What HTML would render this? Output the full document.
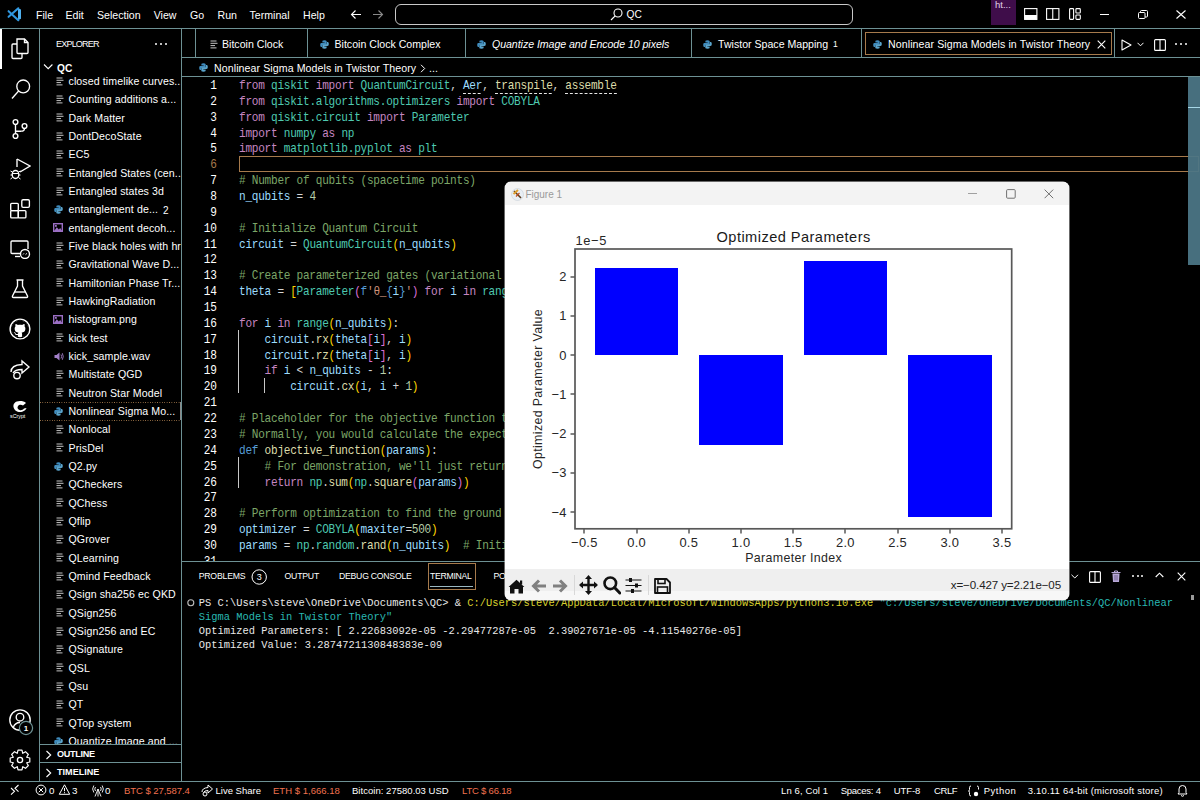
<!DOCTYPE html><html><head><meta charset="utf-8"><style>
html,body{margin:0;padding:0;background:#000;width:1200px;height:800px;overflow:hidden;position:relative;font-family:"Liberation Sans",sans-serif;}
div,svg{box-sizing:border-box}
</style></head><body>
<div style="position:absolute;left:0px;top:28px;width:1200px;height:1px;background:#6d9194"></div>
<svg style="position:absolute;left:6px;top:6px;" width="17" height="17" viewBox="0 0 17 17"><path d="M12 2.2 L15 3.6 V12.8 L12 14.3 Z" fill="#4fb0ee"/><path d="M12.3 2.3 L2.6 10.8 M2.6 5.2 L12.3 14.2" stroke="#2f97e0" stroke-width="2.1" stroke-linecap="round"/></svg>
<div style="position:absolute;left:36px;top:8.61px;line-height:13.78px;font-size:10.6px;color:#fff;font-weight:normal;font-family:'Liberation Sans', sans-serif;white-space:pre;">File</div>
<div style="position:absolute;left:65.5px;top:8.61px;line-height:13.78px;font-size:10.6px;color:#fff;font-weight:normal;font-family:'Liberation Sans', sans-serif;white-space:pre;">Edit</div>
<div style="position:absolute;left:97px;top:8.61px;line-height:13.78px;font-size:10.6px;color:#fff;font-weight:normal;font-family:'Liberation Sans', sans-serif;white-space:pre;">Selection</div>
<div style="position:absolute;left:153.7px;top:8.61px;line-height:13.78px;font-size:10.6px;color:#fff;font-weight:normal;font-family:'Liberation Sans', sans-serif;white-space:pre;">View</div>
<div style="position:absolute;left:190px;top:8.61px;line-height:13.78px;font-size:10.6px;color:#fff;font-weight:normal;font-family:'Liberation Sans', sans-serif;white-space:pre;">Go</div>
<div style="position:absolute;left:217.5px;top:8.61px;line-height:13.78px;font-size:10.6px;color:#fff;font-weight:normal;font-family:'Liberation Sans', sans-serif;white-space:pre;">Run</div>
<div style="position:absolute;left:249.5px;top:8.61px;line-height:13.78px;font-size:10.6px;color:#fff;font-weight:normal;font-family:'Liberation Sans', sans-serif;white-space:pre;">Terminal</div>
<div style="position:absolute;left:303px;top:8.61px;line-height:13.78px;font-size:10.6px;color:#fff;font-weight:normal;font-family:'Liberation Sans', sans-serif;white-space:pre;">Help</div>
<svg style="position:absolute;left:350px;top:9px;" width="12" height="11" viewBox="0 0 12 11"><path d="M11 5.5 H1.5 M5.5 1.5 L1.5 5.5 L5.5 9.5" stroke="#fff" stroke-width="1.1" fill="none"/></svg>
<svg style="position:absolute;left:372px;top:9px;" width="12" height="11" viewBox="0 0 12 11"><path d="M1 5.5 H10.5 M6.5 1.5 L10.5 5.5 L6.5 9.5" stroke="#8a8a8a" stroke-width="1.1" fill="none"/></svg>
<div style="position:absolute;left:394.8px;top:4px;width:458px;height:20.8px;border:1px solid #c8c8c8;border-radius:6px"></div>
<svg style="position:absolute;left:610px;top:8px;" width="13" height="13" viewBox="0 0 13 13"><circle cx="8" cy="5" r="4" stroke="#fff" stroke-width="1.1" fill="none"/><path d="M5.2 7.8 L1 12" stroke="#fff" stroke-width="1.2"/></svg>
<div style="position:absolute;left:626.5px;top:8.37px;line-height:13.26px;font-size:10.2px;color:#fff;font-weight:normal;font-family:'Liberation Sans', sans-serif;white-space:pre;">QC</div>
<div style="position:absolute;left:991px;top:0px;width:25px;height:25px;background:#3f0d4a"></div>
<div style="position:absolute;left:995px;top:-0.67px;line-height:12.35px;font-size:9.5px;color:#e0d0e8;font-weight:normal;font-family:'Liberation Sans', sans-serif;white-space:pre;">ht...</div>
<svg style="position:absolute;left:1024px;top:8px;" width="14" height="12" viewBox="0 0 14 12"><rect x="0.6" y="0.6" width="12.3" height="10.8" stroke="#fff" stroke-width="1.1" fill="none"/><rect x="0.6" y="7" width="12.3" height="4.4" fill="#fff"/></svg>
<svg style="position:absolute;left:1046px;top:8px;" width="14" height="12" viewBox="0 0 14 12"><rect x="0.6" y="0.6" width="12.3" height="10.8" stroke="#fff" stroke-width="1.1" fill="none"/><path d="M6.75 0.6 V11.4" stroke="#fff" stroke-width="1.1"/></svg>
<svg style="position:absolute;left:1069px;top:8px;" width="12" height="12" viewBox="0 0 12 12"><rect x="0.6" y="0.6" width="4" height="10.8" rx="0.8" stroke="#fff" stroke-width="1.1" fill="none"/><rect x="6.9" y="0.6" width="4.4" height="4.4" rx="0.8" stroke="#fff" stroke-width="1.1" fill="none"/><rect x="6.9" y="7" width="4.4" height="4.4" rx="0.8" stroke="#fff" stroke-width="1.1" fill="none"/></svg>
<div style="position:absolute;left:1100px;top:14px;width:9px;height:1px;background:#fff"></div>
<svg style="position:absolute;left:1138px;top:10px;" width="10" height="9" viewBox="0 0 10 9"><rect x="0.5" y="2.5" width="6.5" height="6" rx="1" stroke="#fff" stroke-width="1" fill="none"/><path d="M2.5 2.5 V1.5 Q2.5 0.5 3.5 0.5 H8.5 Q9.5 0.5 9.5 1.5 V6 Q9.5 7 8.5 7 H7" stroke="#fff" stroke-width="1" fill="none"/></svg>
<svg style="position:absolute;left:1176px;top:10px;" width="10" height="9" viewBox="0 0 10 9"><path d="M0.5 0.5 L9.5 8.5 M9.5 0.5 L0.5 8.5" stroke="#fff" stroke-width="1.1"/></svg>
<div style="position:absolute;left:39px;top:29px;width:1px;height:752px;background:#6d9194"></div>
<div style="position:absolute;left:0px;top:29px;width:2px;height:40px;background:#fff"></div>
<svg style="position:absolute;left:10px;top:38px;" width="20" height="22" viewBox="0 0 20 22"><path d="M7 1 H14.5 L18 4.5 V14.5 Q18 15.5 17 15.5 H8 Q7 15.5 7 14.5 Z" stroke="#fff" stroke-width="1.35" fill="none"/><path d="M14.5 1 V4.5 H18" stroke="#fff" stroke-width="1.35" fill="none"/><path d="M7 6 H3 Q2 6 2 7 V19.5 Q2 20.5 3 20.5 H11 Q12 20.5 12 19.5 V15.5" stroke="#fff" stroke-width="1.35" fill="none"/></svg>
<svg style="position:absolute;left:10px;top:78px;" width="22" height="22" viewBox="0 0 22 22"><circle cx="13.2" cy="8.4" r="6.4" stroke="#fff" stroke-width="1.35" fill="none"/><path d="M8.6 13 L2 20.5" stroke="#fff" stroke-width="1.3"/></svg>
<svg style="position:absolute;left:10px;top:118px;" width="20" height="22" viewBox="0 0 20 22"><circle cx="5.5" cy="4" r="2.4" stroke="#fff" stroke-width="1.35" fill="none"/><circle cx="14.5" cy="8" r="2.4" stroke="#fff" stroke-width="1.35" fill="none"/><circle cx="5.5" cy="18" r="2.4" stroke="#fff" stroke-width="1.35" fill="none"/><path d="M5.5 6.4 V15.6 M14.5 10.4 Q14.5 13 11 13.2 H5.5" stroke="#fff" stroke-width="1.35" fill="none"/></svg>
<svg style="position:absolute;left:9px;top:158px;" width="22" height="22" viewBox="0 0 22 22"><path d="M8 1 L21 8 L11 14" stroke="#fff" stroke-width="1.35" fill="none"/><path d="M8 1 V9" stroke="#fff" stroke-width="1.35" fill="none"/><ellipse cx="6.5" cy="16.5" rx="3.3" ry="4" stroke="#fff" stroke-width="1.35" fill="none"/><path d="M1.5 13 L3.5 14 M1.5 17 H3.2 M1.5 21 L3.5 19.5 M11.5 13 L9.5 14 M11.5 17 H9.8 M11.5 21 L9.5 19.5 M3.5 15.5 H9.5" stroke="#fff" stroke-width="1"/></svg>
<svg style="position:absolute;left:10px;top:199px;" width="21" height="20" viewBox="0 0 21 20"><rect x="0.7" y="4.3" width="7.6" height="7.3" rx="1" stroke="#fff" stroke-width="1.35" fill="none"/><rect x="0.7" y="11.6" width="7.6" height="7.3" rx="1" stroke="#fff" stroke-width="1.35" fill="none"/><rect x="8.3" y="11.6" width="7.6" height="7.3" rx="1" stroke="#fff" stroke-width="1.35" fill="none"/><rect x="11.8" y="0.7" width="7.6" height="7.6" rx="1.3" stroke="#fff" stroke-width="1.35" fill="none"/></svg>
<svg style="position:absolute;left:10px;top:240px;" width="21" height="19" viewBox="0 0 21 19"><path d="M11 13.5 H2 Q1 13.5 1 12.5 V2 Q1 1 2 1 H17 Q18 1 18 2 V9" stroke="#fff" stroke-width="1.35" fill="none"/><path d="M5 16.5 H10" stroke="#fff" stroke-width="1.35" fill="none"/><circle cx="15" cy="14" r="4.5" stroke="#fff" stroke-width="1.35" fill="none"/><path d="M13 14.5 L14 13.3 M15.5 14.7 L17 13.3" stroke="#fff" stroke-width="0.9"/></svg>
<svg style="position:absolute;left:11px;top:279px;" width="18" height="20" viewBox="0 0 18 20"><path d="M5.5 1 H12.5 M6.5 1 V7 L1.5 17 Q1 18.5 2.5 18.5 H15.5 Q17 18.5 16.5 17 L11.5 7 V1" stroke="#fff" stroke-width="1.35" fill="none"/><path d="M3.5 13 H14.5" stroke="#fff" stroke-width="1.35" fill="none"/></svg>
<svg style="position:absolute;left:9px;top:318px;" width="22" height="22" viewBox="0 0 22 22"><circle cx="11" cy="11" r="9.9" stroke="#fff" stroke-width="1.4" fill="none"/><circle cx="11" cy="11" r="8.2" fill="#fff"/><path transform="translate(2.6 2.6) scale(1.05)" d="M8 0C3.58 0 0 3.58 0 8c0 3.54 2.29 6.53 5.47 7.59.4.07.55-.17.55-.38 0-.19-.01-.82-.01-1.49-2.01.37-2.530-.49-2.69-.94-.09-.23-.48-.94-.82-1.13-.28-.15-.68-.52-.01-.53.63-.01 1.08.58 1.23.82.72 1.21 1.87.87 2.33.66.07-.52.28-.87.51-1.07-1.78-.2-3.64-.89-3.64-3.950 0-.87.31-1.59.82-2.15-.08-.2-.36-1.02.08-2.12 0 0 .67-.21 2.2.82.64-.18 1.32-.27 2-.27.68 0 1.36.09 2 .27 1.53-1.04 2.2-.82 2.2-.82.44 1.1.16 1.920.08 2.12.51.56.82 1.27.82 2.15 0 3.07-1.87 3.75-3.65 3.95.29.25.54.73.54 1.48 0 1.07-.01 1.93-.01 2.2 0 .21.15.46.55.38A8.013 8.013 0 0016 8c0-4.42-3.58-8-8-8z" fill="#000"/></svg>
<svg style="position:absolute;left:9px;top:358px;" width="22" height="22" viewBox="0 0 22 22"><circle cx="8" cy="17.5" r="3.2" stroke="#fff" stroke-width="1.35" fill="none"/><path d="M2 14 Q2 7 13 6.5 V3 L20 9 L13 15 V11.5 Q6 11.5 4 15" stroke="#fff" stroke-width="1.35" fill="none"/></svg>
<svg style="position:absolute;left:11px;top:400px;" width="18" height="14" viewBox="0 0 18 14"><path d="M9 1 C4 1 2 4 2.5 7 C3 10 6 12 9 12 C12 12 15 10 15.5 8 L13 8.5 C12 10 10 10.5 8.5 10 C6.5 9.3 6 7.5 7 6 C8 4.5 10.5 4.5 12 5.5 L15 3 C13.5 1.5 11.5 1 9 1 Z" fill="#fff"/></svg>
<div style="position:absolute;left:10px;top:413.06px;line-height:6.89px;font-size:5.3px;color:#fff;font-weight:normal;font-family:'Liberation Sans', sans-serif;white-space:pre;">sCrypt</div>
<svg style="position:absolute;left:8px;top:708px;" width="30" height="30" viewBox="0 0 30 30"><circle cx="12" cy="12" r="10.2" stroke="#fff" stroke-width="1.35" fill="none"/><circle cx="12" cy="9.2" r="3.8" stroke="#fff" stroke-width="1.35" fill="none"/><path d="M5.2 19.6 Q7 14.5 12 14.5" stroke="#fff" stroke-width="1.35" fill="none"/></svg>
<svg style="position:absolute;left:18px;top:720px;" width="16" height="16" viewBox="0 0 16 16"><circle cx="8" cy="8" r="6.6" fill="#000" stroke="#6d9194" stroke-width="1.2"/><text x="8" y="11" font-size="8" font-family="Liberation Sans" font-weight="bold" fill="#fff" text-anchor="middle">1</text></svg>
<svg style="position:absolute;left:8px;top:748px;" width="24" height="24" viewBox="0 0 24 24"><polygon points="21.80,10.01 21.80,13.99 18.66,14.74 18.65,14.77 20.33,17.53 17.53,20.33 14.77,18.64 14.74,18.66 13.99,21.80 10.01,21.80 9.26,18.66 9.23,18.65 6.47,20.33 3.67,17.53 5.36,14.77 5.34,14.74 2.20,13.99 2.20,10.01 5.34,9.26 5.35,9.23 3.67,6.47 6.47,3.67 9.23,5.36 9.26,5.34 10.01,2.20 13.99,2.20 14.74,5.34 14.77,5.35 17.53,3.67 20.33,6.47 18.64,9.23 18.66,9.26" stroke="#fff" stroke-width="1.2" fill="none" stroke-linejoin="round"/><circle cx="12" cy="12" r="2.6" stroke="#fff" stroke-width="1.35" fill="none"/></svg>
<div style="position:absolute;left:181px;top:29px;width:1px;height:752px;background:#6d9194"></div>
<div style="position:absolute;left:56px;top:38.88px;line-height:11.83px;font-size:9.1px;color:#fff;font-weight:normal;font-family:'Liberation Sans', sans-serif;white-space:pre;letter-spacing:-0.85px">EXPLORER</div>
<div style="position:absolute;left:155px;top:43px;width:2px;height:2px;background:#fff;border-radius:1px"></div>
<div style="position:absolute;left:160px;top:43px;width:2px;height:2px;background:#fff;border-radius:1px"></div>
<div style="position:absolute;left:165px;top:43px;width:2px;height:2px;background:#fff;border-radius:1px"></div>
<svg style="position:absolute;left:43px;top:63px;" width="11" height="8" viewBox="0 0 11 8"><path d="M1 1.5 L5.2 5.7 L9.4 1.5" stroke="#fff" stroke-width="1.1" fill="none"/></svg>
<div style="position:absolute;left:57px;top:62.37px;line-height:13.26px;font-size:10.2px;color:#fff;font-weight:bold;font-family:'Liberation Sans', sans-serif;white-space:pre;">QC</div>
<div style="position:absolute;left:40px;top:71px;width:141px;height:673px;overflow:hidden">
<svg style="position:absolute;left:16px;top:5.700000000000003px;" width="8" height="9" viewBox="0 0 8 9"><path d="M0.5 1 H6.5 M0.5 3.3 H7.5 M0.5 5.6 H5 M0.5 7.9 H6.5" stroke="#d0d0d0" stroke-width="0.95"/></svg>
<div style="position:absolute;left:28.5px;top:4.01px;line-height:13.78px;font-size:10.6px;color:#fff;font-weight:normal;font-family:'Liberation Sans', sans-serif;white-space:pre;letter-spacing:0.1px">closed timelike curves...</div>
<svg style="position:absolute;left:16px;top:24.03px;" width="8" height="9" viewBox="0 0 8 9"><path d="M0.5 1 H6.5 M0.5 3.3 H7.5 M0.5 5.6 H5 M0.5 7.9 H6.5" stroke="#d0d0d0" stroke-width="0.95"/></svg>
<div style="position:absolute;left:28.5px;top:22.34px;line-height:13.78px;font-size:10.6px;color:#fff;font-weight:normal;font-family:'Liberation Sans', sans-serif;white-space:pre;letter-spacing:0.1px">Counting additions a...</div>
<svg style="position:absolute;left:16px;top:42.36px;" width="8" height="9" viewBox="0 0 8 9"><path d="M0.5 1 H6.5 M0.5 3.3 H7.5 M0.5 5.6 H5 M0.5 7.9 H6.5" stroke="#d0d0d0" stroke-width="0.95"/></svg>
<div style="position:absolute;left:28.5px;top:40.67px;line-height:13.78px;font-size:10.6px;color:#fff;font-weight:normal;font-family:'Liberation Sans', sans-serif;white-space:pre;letter-spacing:0.1px">Dark Matter</div>
<svg style="position:absolute;left:16px;top:60.69px;" width="8" height="9" viewBox="0 0 8 9"><path d="M0.5 1 H6.5 M0.5 3.3 H7.5 M0.5 5.6 H5 M0.5 7.9 H6.5" stroke="#d0d0d0" stroke-width="0.95"/></svg>
<div style="position:absolute;left:28.5px;top:59.0px;line-height:13.78px;font-size:10.6px;color:#fff;font-weight:normal;font-family:'Liberation Sans', sans-serif;white-space:pre;letter-spacing:0.1px">DontDecoState</div>
<svg style="position:absolute;left:16px;top:79.01999999999998px;" width="8" height="9" viewBox="0 0 8 9"><path d="M0.5 1 H6.5 M0.5 3.3 H7.5 M0.5 5.6 H5 M0.5 7.9 H6.5" stroke="#d0d0d0" stroke-width="0.95"/></svg>
<div style="position:absolute;left:28.5px;top:77.33px;line-height:13.78px;font-size:10.6px;color:#fff;font-weight:normal;font-family:'Liberation Sans', sans-serif;white-space:pre;letter-spacing:0.1px">EC5</div>
<svg style="position:absolute;left:16px;top:97.35px;" width="8" height="9" viewBox="0 0 8 9"><path d="M0.5 1 H6.5 M0.5 3.3 H7.5 M0.5 5.6 H5 M0.5 7.9 H6.5" stroke="#d0d0d0" stroke-width="0.95"/></svg>
<div style="position:absolute;left:28.5px;top:95.66px;line-height:13.78px;font-size:10.6px;color:#fff;font-weight:normal;font-family:'Liberation Sans', sans-serif;white-space:pre;letter-spacing:0.1px">Entangled States (cen...</div>
<svg style="position:absolute;left:16px;top:115.68px;" width="8" height="9" viewBox="0 0 8 9"><path d="M0.5 1 H6.5 M0.5 3.3 H7.5 M0.5 5.6 H5 M0.5 7.9 H6.5" stroke="#d0d0d0" stroke-width="0.95"/></svg>
<div style="position:absolute;left:28.5px;top:113.99px;line-height:13.78px;font-size:10.6px;color:#fff;font-weight:normal;font-family:'Liberation Sans', sans-serif;white-space:pre;letter-spacing:0.1px">Entangled states 3d</div>
<svg style="position:absolute;left:14px;top:134.01px;" width="9" height="9" viewBox="0 0 9 9"><path d="M4.5 0.3 C2.2 0.3 2.4 1.3 2.4 1.3 V2.6 H4.6 V3.1 H1.4 C1.4 3.1 0.2 3 0.2 5 C0.2 7 1.3 7 1.3 7 H2 V5.8 C2 5.8 2 4.7 3.1 4.7 H5.7 C5.7 4.7 6.7 4.7 6.7 3.7 V1.6 C6.7 1.6 6.9 0.3 4.5 0.3 Z" fill="#3f8bbd"/><path d="M4.5 8.7 C6.8 8.7 6.6 7.7 6.6 7.7 V6.4 H4.4 V5.9 H7.6 C7.6 5.9 8.8 6 8.8 4 C8.8 2 7.7 2 7.7 2 H7 V3.2 C7 3.2 7 4.3 5.9 4.3 H3.3 C3.3 4.3 2.3 4.3 2.3 5.3 V7.4 C2.3 7.4 2.1 8.7 4.5 8.7 Z" fill="#5aa4cc"/></svg>
<div style="position:absolute;left:28.5px;top:132.32px;line-height:13.78px;font-size:10.6px;color:#fff;font-weight:normal;font-family:'Liberation Sans', sans-serif;white-space:pre;letter-spacing:0.1px">entanglement de...</div>
<div style="position:absolute;left:123px;top:133.01px;line-height:13.0px;font-size:10px;color:#fff;font-weight:normal;font-family:'Liberation Sans', sans-serif;white-space:pre;">2</div>
<svg style="position:absolute;left:13px;top:152.33999999999997px;" width="10" height="9" viewBox="0 0 10 9"><rect x="0.7" y="0.7" width="8.6" height="7.6" fill="none" stroke="#9b6fc4" stroke-width="1.4"/><path d="M1 8.3 L3.8 4.3 L5.8 6.5 L7.2 5 L9.3 8.3 Z" fill="#9b6fc4"/><rect x="2" y="2" width="1.8" height="1.8" fill="#9b6fc4"/></svg>
<div style="position:absolute;left:28.5px;top:150.65px;line-height:13.78px;font-size:10.6px;color:#fff;font-weight:normal;font-family:'Liberation Sans', sans-serif;white-space:pre;letter-spacing:0.1px">entanglement decoh...</div>
<svg style="position:absolute;left:16px;top:170.66999999999996px;" width="8" height="9" viewBox="0 0 8 9"><path d="M0.5 1 H6.5 M0.5 3.3 H7.5 M0.5 5.6 H5 M0.5 7.9 H6.5" stroke="#d0d0d0" stroke-width="0.95"/></svg>
<div style="position:absolute;left:28.5px;top:168.98px;line-height:13.78px;font-size:10.6px;color:#fff;font-weight:normal;font-family:'Liberation Sans', sans-serif;white-space:pre;letter-spacing:0.1px">Five black holes with hr</div>
<svg style="position:absolute;left:16px;top:189.0px;" width="8" height="9" viewBox="0 0 8 9"><path d="M0.5 1 H6.5 M0.5 3.3 H7.5 M0.5 5.6 H5 M0.5 7.9 H6.5" stroke="#d0d0d0" stroke-width="0.95"/></svg>
<div style="position:absolute;left:28.5px;top:187.31px;line-height:13.78px;font-size:10.6px;color:#fff;font-weight:normal;font-family:'Liberation Sans', sans-serif;white-space:pre;letter-spacing:0.1px">Gravitational Wave D...</div>
<svg style="position:absolute;left:16px;top:207.32999999999998px;" width="8" height="9" viewBox="0 0 8 9"><path d="M0.5 1 H6.5 M0.5 3.3 H7.5 M0.5 5.6 H5 M0.5 7.9 H6.5" stroke="#d0d0d0" stroke-width="0.95"/></svg>
<div style="position:absolute;left:28.5px;top:205.64px;line-height:13.78px;font-size:10.6px;color:#fff;font-weight:normal;font-family:'Liberation Sans', sans-serif;white-space:pre;letter-spacing:0.1px">Hamiltonian Phase Tr...</div>
<svg style="position:absolute;left:16px;top:225.65999999999997px;" width="8" height="9" viewBox="0 0 8 9"><path d="M0.5 1 H6.5 M0.5 3.3 H7.5 M0.5 5.6 H5 M0.5 7.9 H6.5" stroke="#d0d0d0" stroke-width="0.95"/></svg>
<div style="position:absolute;left:28.5px;top:223.97px;line-height:13.78px;font-size:10.6px;color:#fff;font-weight:normal;font-family:'Liberation Sans', sans-serif;white-space:pre;letter-spacing:0.1px">HawkingRadiation</div>
<svg style="position:absolute;left:13px;top:243.98999999999995px;" width="10" height="9" viewBox="0 0 10 9"><rect x="0.7" y="0.7" width="8.6" height="7.6" fill="none" stroke="#9b6fc4" stroke-width="1.4"/><path d="M1 8.3 L3.8 4.3 L5.8 6.5 L7.2 5 L9.3 8.3 Z" fill="#9b6fc4"/><rect x="2" y="2" width="1.8" height="1.8" fill="#9b6fc4"/></svg>
<div style="position:absolute;left:28.5px;top:242.3px;line-height:13.78px;font-size:10.6px;color:#fff;font-weight:normal;font-family:'Liberation Sans', sans-serif;white-space:pre;letter-spacing:0.1px">histogram.png</div>
<svg style="position:absolute;left:16px;top:262.32px;" width="8" height="9" viewBox="0 0 8 9"><path d="M0.5 1 H6.5 M0.5 3.3 H7.5 M0.5 5.6 H5 M0.5 7.9 H6.5" stroke="#d0d0d0" stroke-width="0.95"/></svg>
<div style="position:absolute;left:28.5px;top:260.63px;line-height:13.78px;font-size:10.6px;color:#fff;font-weight:normal;font-family:'Liberation Sans', sans-serif;white-space:pre;letter-spacing:0.1px">kick test</div>
<svg style="position:absolute;left:14px;top:280.65px;" width="10" height="9" viewBox="0 0 10 9"><path d="M0.5 3 H2.5 L5.5 0.5 V8.5 L2.5 6 H0.5 Z" fill="#a27fc8"/><path d="M7 2.5 Q8.3 4.5 7 6.5 M8.3 1.2 Q10.2 4.5 8.3 7.8" stroke="#a27fc8" stroke-width="0.9" fill="none"/></svg>
<div style="position:absolute;left:28.5px;top:278.96px;line-height:13.78px;font-size:10.6px;color:#fff;font-weight:normal;font-family:'Liberation Sans', sans-serif;white-space:pre;letter-spacing:0.1px">kick_sample.wav</div>
<svg style="position:absolute;left:16px;top:298.97999999999996px;" width="8" height="9" viewBox="0 0 8 9"><path d="M0.5 1 H6.5 M0.5 3.3 H7.5 M0.5 5.6 H5 M0.5 7.9 H6.5" stroke="#d0d0d0" stroke-width="0.95"/></svg>
<div style="position:absolute;left:28.5px;top:297.29px;line-height:13.78px;font-size:10.6px;color:#fff;font-weight:normal;font-family:'Liberation Sans', sans-serif;white-space:pre;letter-spacing:0.1px">Multistate QGD</div>
<svg style="position:absolute;left:16px;top:317.30999999999995px;" width="8" height="9" viewBox="0 0 8 9"><path d="M0.5 1 H6.5 M0.5 3.3 H7.5 M0.5 5.6 H5 M0.5 7.9 H6.5" stroke="#d0d0d0" stroke-width="0.95"/></svg>
<div style="position:absolute;left:28.5px;top:315.62px;line-height:13.78px;font-size:10.6px;color:#fff;font-weight:normal;font-family:'Liberation Sans', sans-serif;white-space:pre;letter-spacing:0.1px">Neutron Star Model</div>
<div style="position:absolute;left:0.3px;top:330.93999999999994px;width:140.5px;height:1px;background-image:linear-gradient(90deg,#a67a4c 50%,transparent 50%);background-size:2.4px 1px"></div>
<div style="position:absolute;left:0.3px;top:348.5399999999999px;width:140.5px;height:1px;background-image:linear-gradient(90deg,#a67a4c 50%,transparent 50%);background-size:2.4px 1px"></div>
<div style="position:absolute;left:139.5px;top:331.13999999999993px;width:1px;height:17.6px;background:#8a8a8a"></div>
<svg style="position:absolute;left:14px;top:335.63999999999993px;" width="9" height="9" viewBox="0 0 9 9"><path d="M4.5 0.3 C2.2 0.3 2.4 1.3 2.4 1.3 V2.6 H4.6 V3.1 H1.4 C1.4 3.1 0.2 3 0.2 5 C0.2 7 1.3 7 1.3 7 H2 V5.8 C2 5.8 2 4.7 3.1 4.7 H5.7 C5.7 4.7 6.7 4.7 6.7 3.7 V1.6 C6.7 1.6 6.9 0.3 4.5 0.3 Z" fill="#3f8bbd"/><path d="M4.5 8.7 C6.8 8.7 6.6 7.7 6.6 7.7 V6.4 H4.4 V5.9 H7.6 C7.6 5.9 8.8 6 8.8 4 C8.8 2 7.7 2 7.7 2 H7 V3.2 C7 3.2 7 4.3 5.9 4.3 H3.3 C3.3 4.3 2.3 4.3 2.3 5.3 V7.4 C2.3 7.4 2.1 8.7 4.5 8.7 Z" fill="#5aa4cc"/></svg>
<div style="position:absolute;left:28.5px;top:333.95px;line-height:13.78px;font-size:10.6px;color:#fff;font-weight:normal;font-family:'Liberation Sans', sans-serif;white-space:pre;letter-spacing:0.1px">Nonlinear Sigma Mo...</div>
<svg style="position:absolute;left:16px;top:353.96999999999997px;" width="8" height="9" viewBox="0 0 8 9"><path d="M0.5 1 H6.5 M0.5 3.3 H7.5 M0.5 5.6 H5 M0.5 7.9 H6.5" stroke="#d0d0d0" stroke-width="0.95"/></svg>
<div style="position:absolute;left:28.5px;top:352.28px;line-height:13.78px;font-size:10.6px;color:#fff;font-weight:normal;font-family:'Liberation Sans', sans-serif;white-space:pre;letter-spacing:0.1px">Nonlocal</div>
<svg style="position:absolute;left:16px;top:372.29999999999995px;" width="8" height="9" viewBox="0 0 8 9"><path d="M0.5 1 H6.5 M0.5 3.3 H7.5 M0.5 5.6 H5 M0.5 7.9 H6.5" stroke="#d0d0d0" stroke-width="0.95"/></svg>
<div style="position:absolute;left:28.5px;top:370.61px;line-height:13.78px;font-size:10.6px;color:#fff;font-weight:normal;font-family:'Liberation Sans', sans-serif;white-space:pre;letter-spacing:0.1px">PrisDel</div>
<svg style="position:absolute;left:14px;top:390.62999999999994px;" width="9" height="9" viewBox="0 0 9 9"><path d="M4.5 0.3 C2.2 0.3 2.4 1.3 2.4 1.3 V2.6 H4.6 V3.1 H1.4 C1.4 3.1 0.2 3 0.2 5 C0.2 7 1.3 7 1.3 7 H2 V5.8 C2 5.8 2 4.7 3.1 4.7 H5.7 C5.7 4.7 6.7 4.7 6.7 3.7 V1.6 C6.7 1.6 6.9 0.3 4.5 0.3 Z" fill="#3f8bbd"/><path d="M4.5 8.7 C6.8 8.7 6.6 7.7 6.6 7.7 V6.4 H4.4 V5.9 H7.6 C7.6 5.9 8.8 6 8.8 4 C8.8 2 7.7 2 7.7 2 H7 V3.2 C7 3.2 7 4.3 5.9 4.3 H3.3 C3.3 4.3 2.3 4.3 2.3 5.3 V7.4 C2.3 7.4 2.1 8.7 4.5 8.7 Z" fill="#5aa4cc"/></svg>
<div style="position:absolute;left:28.5px;top:388.94px;line-height:13.78px;font-size:10.6px;color:#fff;font-weight:normal;font-family:'Liberation Sans', sans-serif;white-space:pre;letter-spacing:0.1px">Q2.py</div>
<svg style="position:absolute;left:16px;top:408.96px;" width="8" height="9" viewBox="0 0 8 9"><path d="M0.5 1 H6.5 M0.5 3.3 H7.5 M0.5 5.6 H5 M0.5 7.9 H6.5" stroke="#d0d0d0" stroke-width="0.95"/></svg>
<div style="position:absolute;left:28.5px;top:407.27px;line-height:13.78px;font-size:10.6px;color:#fff;font-weight:normal;font-family:'Liberation Sans', sans-serif;white-space:pre;letter-spacing:0.1px">QCheckers</div>
<svg style="position:absolute;left:16px;top:427.28999999999996px;" width="8" height="9" viewBox="0 0 8 9"><path d="M0.5 1 H6.5 M0.5 3.3 H7.5 M0.5 5.6 H5 M0.5 7.9 H6.5" stroke="#d0d0d0" stroke-width="0.95"/></svg>
<div style="position:absolute;left:28.5px;top:425.6px;line-height:13.78px;font-size:10.6px;color:#fff;font-weight:normal;font-family:'Liberation Sans', sans-serif;white-space:pre;letter-spacing:0.1px">QChess</div>
<svg style="position:absolute;left:16px;top:445.62px;" width="8" height="9" viewBox="0 0 8 9"><path d="M0.5 1 H6.5 M0.5 3.3 H7.5 M0.5 5.6 H5 M0.5 7.9 H6.5" stroke="#d0d0d0" stroke-width="0.95"/></svg>
<div style="position:absolute;left:28.5px;top:443.93px;line-height:13.78px;font-size:10.6px;color:#fff;font-weight:normal;font-family:'Liberation Sans', sans-serif;white-space:pre;letter-spacing:0.1px">Qflip</div>
<svg style="position:absolute;left:16px;top:463.94999999999993px;" width="8" height="9" viewBox="0 0 8 9"><path d="M0.5 1 H6.5 M0.5 3.3 H7.5 M0.5 5.6 H5 M0.5 7.9 H6.5" stroke="#d0d0d0" stroke-width="0.95"/></svg>
<div style="position:absolute;left:28.5px;top:462.26px;line-height:13.78px;font-size:10.6px;color:#fff;font-weight:normal;font-family:'Liberation Sans', sans-serif;white-space:pre;letter-spacing:0.1px">QGrover</div>
<svg style="position:absolute;left:16px;top:482.28px;" width="8" height="9" viewBox="0 0 8 9"><path d="M0.5 1 H6.5 M0.5 3.3 H7.5 M0.5 5.6 H5 M0.5 7.9 H6.5" stroke="#d0d0d0" stroke-width="0.95"/></svg>
<div style="position:absolute;left:28.5px;top:480.59px;line-height:13.78px;font-size:10.6px;color:#fff;font-weight:normal;font-family:'Liberation Sans', sans-serif;white-space:pre;letter-spacing:0.1px">QLearning</div>
<svg style="position:absolute;left:16px;top:500.61px;" width="8" height="9" viewBox="0 0 8 9"><path d="M0.5 1 H6.5 M0.5 3.3 H7.5 M0.5 5.6 H5 M0.5 7.9 H6.5" stroke="#d0d0d0" stroke-width="0.95"/></svg>
<div style="position:absolute;left:28.5px;top:498.92px;line-height:13.78px;font-size:10.6px;color:#fff;font-weight:normal;font-family:'Liberation Sans', sans-serif;white-space:pre;letter-spacing:0.1px">Qmind Feedback</div>
<svg style="position:absolute;left:16px;top:518.94px;" width="8" height="9" viewBox="0 0 8 9"><path d="M0.5 1 H6.5 M0.5 3.3 H7.5 M0.5 5.6 H5 M0.5 7.9 H6.5" stroke="#d0d0d0" stroke-width="0.95"/></svg>
<div style="position:absolute;left:28.5px;top:517.25px;line-height:13.78px;font-size:10.6px;color:#fff;font-weight:normal;font-family:'Liberation Sans', sans-serif;white-space:pre;letter-spacing:0.1px">Qsign sha256 ec QKD</div>
<svg style="position:absolute;left:16px;top:537.27px;" width="8" height="9" viewBox="0 0 8 9"><path d="M0.5 1 H6.5 M0.5 3.3 H7.5 M0.5 5.6 H5 M0.5 7.9 H6.5" stroke="#d0d0d0" stroke-width="0.95"/></svg>
<div style="position:absolute;left:28.5px;top:535.58px;line-height:13.78px;font-size:10.6px;color:#fff;font-weight:normal;font-family:'Liberation Sans', sans-serif;white-space:pre;letter-spacing:0.1px">QSign256</div>
<svg style="position:absolute;left:16px;top:555.6px;" width="8" height="9" viewBox="0 0 8 9"><path d="M0.5 1 H6.5 M0.5 3.3 H7.5 M0.5 5.6 H5 M0.5 7.9 H6.5" stroke="#d0d0d0" stroke-width="0.95"/></svg>
<div style="position:absolute;left:28.5px;top:553.91px;line-height:13.78px;font-size:10.6px;color:#fff;font-weight:normal;font-family:'Liberation Sans', sans-serif;white-space:pre;letter-spacing:0.1px">QSign256 and EC</div>
<svg style="position:absolute;left:16px;top:573.93px;" width="8" height="9" viewBox="0 0 8 9"><path d="M0.5 1 H6.5 M0.5 3.3 H7.5 M0.5 5.6 H5 M0.5 7.9 H6.5" stroke="#d0d0d0" stroke-width="0.95"/></svg>
<div style="position:absolute;left:28.5px;top:572.24px;line-height:13.78px;font-size:10.6px;color:#fff;font-weight:normal;font-family:'Liberation Sans', sans-serif;white-space:pre;letter-spacing:0.1px">QSignature</div>
<svg style="position:absolute;left:16px;top:592.26px;" width="8" height="9" viewBox="0 0 8 9"><path d="M0.5 1 H6.5 M0.5 3.3 H7.5 M0.5 5.6 H5 M0.5 7.9 H6.5" stroke="#d0d0d0" stroke-width="0.95"/></svg>
<div style="position:absolute;left:28.5px;top:590.57px;line-height:13.78px;font-size:10.6px;color:#fff;font-weight:normal;font-family:'Liberation Sans', sans-serif;white-space:pre;letter-spacing:0.1px">QSL</div>
<svg style="position:absolute;left:16px;top:610.59px;" width="8" height="9" viewBox="0 0 8 9"><path d="M0.5 1 H6.5 M0.5 3.3 H7.5 M0.5 5.6 H5 M0.5 7.9 H6.5" stroke="#d0d0d0" stroke-width="0.95"/></svg>
<div style="position:absolute;left:28.5px;top:608.9px;line-height:13.78px;font-size:10.6px;color:#fff;font-weight:normal;font-family:'Liberation Sans', sans-serif;white-space:pre;letter-spacing:0.1px">Qsu</div>
<svg style="position:absolute;left:16px;top:628.92px;" width="8" height="9" viewBox="0 0 8 9"><path d="M0.5 1 H6.5 M0.5 3.3 H7.5 M0.5 5.6 H5 M0.5 7.9 H6.5" stroke="#d0d0d0" stroke-width="0.95"/></svg>
<div style="position:absolute;left:28.5px;top:627.23px;line-height:13.78px;font-size:10.6px;color:#fff;font-weight:normal;font-family:'Liberation Sans', sans-serif;white-space:pre;letter-spacing:0.1px">QT</div>
<svg style="position:absolute;left:16px;top:647.25px;" width="8" height="9" viewBox="0 0 8 9"><path d="M0.5 1 H6.5 M0.5 3.3 H7.5 M0.5 5.6 H5 M0.5 7.9 H6.5" stroke="#d0d0d0" stroke-width="0.95"/></svg>
<div style="position:absolute;left:28.5px;top:645.56px;line-height:13.78px;font-size:10.6px;color:#fff;font-weight:normal;font-family:'Liberation Sans', sans-serif;white-space:pre;letter-spacing:0.1px">QTop system</div>
<svg style="position:absolute;left:14px;top:665.5799999999999px;" width="9" height="9" viewBox="0 0 9 9"><path d="M4.5 0.3 C2.2 0.3 2.4 1.3 2.4 1.3 V2.6 H4.6 V3.1 H1.4 C1.4 3.1 0.2 3 0.2 5 C0.2 7 1.3 7 1.3 7 H2 V5.8 C2 5.8 2 4.7 3.1 4.7 H5.7 C5.7 4.7 6.7 4.7 6.7 3.7 V1.6 C6.7 1.6 6.9 0.3 4.5 0.3 Z" fill="#3f8bbd"/><path d="M4.5 8.7 C6.8 8.7 6.6 7.7 6.6 7.7 V6.4 H4.4 V5.9 H7.6 C7.6 5.9 8.8 6 8.8 4 C8.8 2 7.7 2 7.7 2 H7 V3.2 C7 3.2 7 4.3 5.9 4.3 H3.3 C3.3 4.3 2.3 4.3 2.3 5.3 V7.4 C2.3 7.4 2.1 8.7 4.5 8.7 Z" fill="#5aa4cc"/></svg>
<div style="position:absolute;left:28.5px;top:663.89px;line-height:13.78px;font-size:10.6px;color:#fff;font-weight:normal;font-family:'Liberation Sans', sans-serif;white-space:pre;letter-spacing:0.1px">Quantize Image and ...</div>
</div>
<div style="position:absolute;left:40px;top:744px;width:141px;height:1px;background:#6d9194"></div>
<div style="position:absolute;left:40px;top:762px;width:141px;height:1px;background:#6d9194"></div>
<svg style="position:absolute;left:45px;top:749.5px;" width="8" height="10" viewBox="0 0 8 10"><path d="M1.5 1 L5.7 5 L1.5 9" stroke="#fff" stroke-width="1.1" fill="none"/></svg>
<div style="position:absolute;left:57px;top:748.99px;line-height:11.83px;font-size:9.1px;color:#fff;font-weight:bold;font-family:'Liberation Sans', sans-serif;white-space:pre;letter-spacing:-0.3px">OUTLINE</div>
<svg style="position:absolute;left:45px;top:767.5px;" width="8" height="10" viewBox="0 0 8 10"><path d="M1.5 1 L5.7 5 L1.5 9" stroke="#fff" stroke-width="1.1" fill="none"/></svg>
<div style="position:absolute;left:57px;top:766.99px;line-height:11.83px;font-size:9.1px;color:#fff;font-weight:bold;font-family:'Liberation Sans', sans-serif;white-space:pre;letter-spacing:0px">TIMELINE</div>
<div style="position:absolute;left:0px;top:781px;width:1200px;height:1px;background:#6d9194"></div>
<svg style="position:absolute;left:9px;top:783px;" width="12" height="14" viewBox="0 0 12 14"><path d="M2 5 L5.5 8.3 L2 11.7 M9.5 2 L6 5.3 L9.5 8.6" stroke="#fff" stroke-width="1.1" fill="none"/></svg>
<svg style="position:absolute;left:34.8px;top:784.3px;" width="12" height="12" viewBox="0 0 12 12"><circle cx="6" cy="6" r="4.9" stroke="#fff" stroke-width="1" fill="none"/><path d="M3.8 3.8 L8.2 8.2 M8.2 3.8 L3.8 8.2" stroke="#fff" stroke-width="1"/></svg>
<div style="position:absolute;left:49px;top:784.83px;line-height:12.74px;font-size:9.8px;color:#fff;font-weight:normal;font-family:'Liberation Sans', sans-serif;white-space:pre;">0</div>
<svg style="position:absolute;left:57.5px;top:784.3px;" width="13" height="12" viewBox="0 0 13 12"><path d="M6.5 0.8 L11.7 10.3 H1.3 Z" stroke="#fff" stroke-width="1" fill="none"/><path d="M6.5 4 V7.2 M6.5 8.2 V9.2" stroke="#fff" stroke-width="1"/></svg>
<div style="position:absolute;left:72px;top:784.83px;line-height:12.74px;font-size:9.8px;color:#fff;font-weight:normal;font-family:'Liberation Sans', sans-serif;white-space:pre;">3</div>
<svg style="position:absolute;left:91.5px;top:784.5px;" width="12" height="12" viewBox="0 0 12 12"><path d="M6 4 V11.5 M3 11.5 L6 4 L9 11.5 M3.5 2 Q2 4 3.5 6 M8.5 2 Q10 4 8.5 6 M1.8 0.5 Q-0.5 4 1.8 7.5 M10.2 0.5 Q12.5 4 10.2 7.5" stroke="#fff" stroke-width="0.9" fill="none"/></svg>
<div style="position:absolute;left:105px;top:784.83px;line-height:12.74px;font-size:9.8px;color:#fff;font-weight:normal;font-family:'Liberation Sans', sans-serif;white-space:pre;">0</div>
<div style="position:absolute;left:124px;top:785.03px;line-height:12.35px;font-size:9.5px;color:#f0714f;font-weight:normal;font-family:'Liberation Sans', sans-serif;white-space:pre;letter-spacing:-0.05px">BTC $ 27,587.4</div>
<svg style="position:absolute;left:201px;top:784px;" width="12" height="13" viewBox="0 0 12 13"><circle cx="4" cy="10" r="2" stroke="#fff" stroke-width="1" fill="none"/><path d="M1 8 Q1 4 7 3.5 V1 L11.5 5 L7 9 V6.5 Q3.5 6.5 2.5 8.5" stroke="#fff" stroke-width="1" fill="none"/></svg>
<div style="position:absolute;left:215.5px;top:785.03px;line-height:12.35px;font-size:9.5px;color:#fff;font-weight:normal;font-family:'Liberation Sans', sans-serif;white-space:pre;letter-spacing:0px">Live Share</div>
<div style="position:absolute;left:273px;top:785.03px;line-height:12.35px;font-size:9.5px;color:#f0714f;font-weight:normal;font-family:'Liberation Sans', sans-serif;white-space:pre;letter-spacing:0.02px">ETH $ 1,666.18</div>
<div style="position:absolute;left:352px;top:785.03px;line-height:12.35px;font-size:9.5px;color:#fff;font-weight:normal;font-family:'Liberation Sans', sans-serif;white-space:pre;letter-spacing:0.03px">Bitcoin: 27580.03 USD</div>
<div style="position:absolute;left:462px;top:785.03px;line-height:12.35px;font-size:9.5px;color:#f0714f;font-weight:normal;font-family:'Liberation Sans', sans-serif;white-space:pre;letter-spacing:-0.2px">LTC $ 66.18</div>
<div style="position:absolute;left:781px;top:785.03px;line-height:12.35px;font-size:9.5px;color:#fff;font-weight:normal;font-family:'Liberation Sans', sans-serif;white-space:pre;letter-spacing:0.12px">Ln 6, Col 1</div>
<div style="position:absolute;left:840.7px;top:785.03px;line-height:12.35px;font-size:9.5px;color:#fff;font-weight:normal;font-family:'Liberation Sans', sans-serif;white-space:pre;letter-spacing:-0.25px">Spaces: 4</div>
<div style="position:absolute;left:893.8px;top:785.03px;line-height:12.35px;font-size:9.5px;color:#fff;font-weight:normal;font-family:'Liberation Sans', sans-serif;white-space:pre;letter-spacing:-0.1px">UTF-8</div>
<div style="position:absolute;left:934px;top:785.03px;line-height:12.35px;font-size:9.5px;color:#fff;font-weight:normal;font-family:'Liberation Sans', sans-serif;white-space:pre;letter-spacing:-0.4px">CRLF</div>
<svg style="position:absolute;left:968px;top:784.5px;" width="12" height="12" viewBox="0 0 12 12"><path d="M3 1 Q1.5 1 1.5 2.5 V4.5 Q1.5 6 0.5 6 Q1.5 6 1.5 7.5 V9.5 Q1.5 11 3 11 M9 1 Q10.5 1 10.5 2.5 V4.5" stroke="#fff" stroke-width="1" fill="none"/><circle cx="8" cy="9" r="2.2" fill="#fff"/></svg>
<div style="position:absolute;left:983.7px;top:785.03px;line-height:12.35px;font-size:9.5px;color:#fff;font-weight:normal;font-family:'Liberation Sans', sans-serif;white-space:pre;letter-spacing:0.5px">Python</div>
<div style="position:absolute;left:1027.7px;top:785.03px;line-height:12.35px;font-size:9.5px;color:#fff;font-weight:normal;font-family:'Liberation Sans', sans-serif;white-space:pre;letter-spacing:0.2px">3.10.11 64-bit (microsoft store)</div>
<svg style="position:absolute;left:1177px;top:784px;" width="11" height="13" viewBox="0 0 11 13"><path d="M1 10 H10 L9 8.5 V5 Q9 1.5 5.5 1.5 Q2 1.5 2 5 V8.5 Z M4 11.5 Q5.5 13 7 11.5" stroke="#fff" stroke-width="1" fill="none"/></svg>
<div style="position:absolute;left:182px;top:57px;width:1018px;height:1px;background:#6d9194"></div>
<div style="position:absolute;left:194.5px;top:29px;width:1px;height:28px;background:#6d9194"></div>
<div style="position:absolute;left:307px;top:29px;width:1px;height:28px;background:#6d9194"></div>
<div style="position:absolute;left:464.5px;top:29px;width:1px;height:28px;background:#6d9194"></div>
<div style="position:absolute;left:690.5px;top:29px;width:1px;height:28px;background:#6d9194"></div>
<div style="position:absolute;left:861px;top:29px;width:1px;height:28px;background:#6d9194"></div>
<div style="position:absolute;left:1113.5px;top:29px;width:1px;height:28px;background:#6d9194"></div>
<svg style="position:absolute;left:210px;top:39.5px;" width="8" height="9" viewBox="0 0 8 9"><path d="M0.5 1 H6.5 M0.5 3.3 H7.5 M0.5 5.6 H5 M0.5 7.9 H6.5" stroke="#d0d0d0" stroke-width="0.95"/></svg>
<div style="position:absolute;left:222px;top:38.01px;line-height:13.78px;font-size:10.6px;color:#fff;font-weight:normal;font-family:'Liberation Sans', sans-serif;white-space:pre;">Bitcoin Clock</div>
<svg style="position:absolute;left:319.5px;top:39.5px;" width="9" height="9" viewBox="0 0 9 9"><path d="M4.5 0.3 C2.2 0.3 2.4 1.3 2.4 1.3 V2.6 H4.6 V3.1 H1.4 C1.4 3.1 0.2 3 0.2 5 C0.2 7 1.3 7 1.3 7 H2 V5.8 C2 5.8 2 4.7 3.1 4.7 H5.7 C5.7 4.7 6.7 4.7 6.7 3.7 V1.6 C6.7 1.6 6.9 0.3 4.5 0.3 Z" fill="#3f8bbd"/><path d="M4.5 8.7 C6.8 8.7 6.6 7.7 6.6 7.7 V6.4 H4.4 V5.9 H7.6 C7.6 5.9 8.8 6 8.8 4 C8.8 2 7.7 2 7.7 2 H7 V3.2 C7 3.2 7 4.3 5.9 4.3 H3.3 C3.3 4.3 2.3 4.3 2.3 5.3 V7.4 C2.3 7.4 2.1 8.7 4.5 8.7 Z" fill="#5aa4cc"/></svg>
<div style="position:absolute;left:334.5px;top:38.01px;line-height:13.78px;font-size:10.6px;color:#fff;font-weight:normal;font-family:'Liberation Sans', sans-serif;white-space:pre;">Bitcoin Clock Complex</div>
<svg style="position:absolute;left:476.5px;top:39.5px;" width="9" height="9" viewBox="0 0 9 9"><path d="M4.5 0.3 C2.2 0.3 2.4 1.3 2.4 1.3 V2.6 H4.6 V3.1 H1.4 C1.4 3.1 0.2 3 0.2 5 C0.2 7 1.3 7 1.3 7 H2 V5.8 C2 5.8 2 4.7 3.1 4.7 H5.7 C5.7 4.7 6.7 4.7 6.7 3.7 V1.6 C6.7 1.6 6.9 0.3 4.5 0.3 Z" fill="#3f8bbd"/><path d="M4.5 8.7 C6.8 8.7 6.6 7.7 6.6 7.7 V6.4 H4.4 V5.9 H7.6 C7.6 5.9 8.8 6 8.8 4 C8.8 2 7.7 2 7.7 2 H7 V3.2 C7 3.2 7 4.3 5.9 4.3 H3.3 C3.3 4.3 2.3 4.3 2.3 5.3 V7.4 C2.3 7.4 2.1 8.7 4.5 8.7 Z" fill="#5aa4cc"/></svg>
<div style="position:absolute;left:492px;top:38.01px;line-height:13.78px;font-size:10.6px;color:#fff;font-weight:normal;font-family:'Liberation Sans', sans-serif;white-space:pre;font-style:italic;letter-spacing:-0.05px">Quantize Image and Encode 10 pixels</div>
<svg style="position:absolute;left:702.5px;top:39.5px;" width="9" height="9" viewBox="0 0 9 9"><path d="M4.5 0.3 C2.2 0.3 2.4 1.3 2.4 1.3 V2.6 H4.6 V3.1 H1.4 C1.4 3.1 0.2 3 0.2 5 C0.2 7 1.3 7 1.3 7 H2 V5.8 C2 5.8 2 4.7 3.1 4.7 H5.7 C5.7 4.7 6.7 4.7 6.7 3.7 V1.6 C6.7 1.6 6.9 0.3 4.5 0.3 Z" fill="#3f8bbd"/><path d="M4.5 8.7 C6.8 8.7 6.6 7.7 6.6 7.7 V6.4 H4.4 V5.9 H7.6 C7.6 5.9 8.8 6 8.8 4 C8.8 2 7.7 2 7.7 2 H7 V3.2 C7 3.2 7 4.3 5.9 4.3 H3.3 C3.3 4.3 2.3 4.3 2.3 5.3 V7.4 C2.3 7.4 2.1 8.7 4.5 8.7 Z" fill="#5aa4cc"/></svg>
<div style="position:absolute;left:718px;top:38.01px;line-height:13.78px;font-size:10.6px;color:#fff;font-weight:normal;font-family:'Liberation Sans', sans-serif;white-space:pre;">Twistor Space Mapping</div>
<div style="position:absolute;left:833px;top:39.48px;line-height:11.05px;font-size:8.5px;color:#fff;font-weight:normal;font-family:'Liberation Sans', sans-serif;white-space:pre;">1</div>
<div style="position:absolute;left:864.5px;top:32px;width:247px;height:23px;border:1px solid #a67a4c"></div>
<svg style="position:absolute;left:873px;top:39.5px;" width="9" height="9" viewBox="0 0 9 9"><path d="M4.5 0.3 C2.2 0.3 2.4 1.3 2.4 1.3 V2.6 H4.6 V3.1 H1.4 C1.4 3.1 0.2 3 0.2 5 C0.2 7 1.3 7 1.3 7 H2 V5.8 C2 5.8 2 4.7 3.1 4.7 H5.7 C5.7 4.7 6.7 4.7 6.7 3.7 V1.6 C6.7 1.6 6.9 0.3 4.5 0.3 Z" fill="#3f8bbd"/><path d="M4.5 8.7 C6.8 8.7 6.6 7.7 6.6 7.7 V6.4 H4.4 V5.9 H7.6 C7.6 5.9 8.8 6 8.8 4 C8.8 2 7.7 2 7.7 2 H7 V3.2 C7 3.2 7 4.3 5.9 4.3 H3.3 C3.3 4.3 2.3 4.3 2.3 5.3 V7.4 C2.3 7.4 2.1 8.7 4.5 8.7 Z" fill="#5aa4cc"/></svg>
<div style="position:absolute;left:888px;top:38.01px;line-height:13.78px;font-size:10.6px;color:#fff;font-weight:normal;font-family:'Liberation Sans', sans-serif;white-space:pre;letter-spacing:0.09px">Nonlinear Sigma Models in Twistor Theory</div>
<svg style="position:absolute;left:1097px;top:40px;" width="9" height="9" viewBox="0 0 9 9"><path d="M0.7 0.7 L8.3 8.3 M8.3 0.7 L0.7 8.3" stroke="#fff" stroke-width="1.1"/></svg>
<svg style="position:absolute;left:1121px;top:38.5px;" width="11" height="12" viewBox="0 0 11 12"><path d="M1 1 L10 6 L1 11 Z" stroke="#fff" stroke-width="1.1" fill="none" stroke-linejoin="round"/></svg>
<svg style="position:absolute;left:1136.5px;top:42px;" width="7" height="5" viewBox="0 0 7 5"><path d="M0.5 0.8 L3.5 3.8 L6.5 0.8" stroke="#fff" stroke-width="1" fill="none"/></svg>
<svg style="position:absolute;left:1153.5px;top:38.5px;" width="12" height="12" viewBox="0 0 12 12"><rect x="0.6" y="0.6" width="10.8" height="10.8" rx="1" stroke="#fff" stroke-width="1.1" fill="none"/><path d="M6 0.6 V11.4" stroke="#fff" stroke-width="1.1"/></svg>
<div style="position:absolute;left:1175.3px;top:43.3px;width:2.2px;height:2.2px;background:#fff;border-radius:1.1px"></div>
<div style="position:absolute;left:1179.8999999999999px;top:43.3px;width:2.2px;height:2.2px;background:#fff;border-radius:1.1px"></div>
<div style="position:absolute;left:1184.5px;top:43.3px;width:2.2px;height:2.2px;background:#fff;border-radius:1.1px"></div>
<div style="position:absolute;left:182px;top:76px;width:1018px;height:1px;background:#6d9194"></div>
<svg style="position:absolute;left:198.5px;top:62.8px;" width="9" height="9" viewBox="0 0 9 9"><path d="M4.5 0.3 C2.2 0.3 2.4 1.3 2.4 1.3 V2.6 H4.6 V3.1 H1.4 C1.4 3.1 0.2 3 0.2 5 C0.2 7 1.3 7 1.3 7 H2 V5.8 C2 5.8 2 4.7 3.1 4.7 H5.7 C5.7 4.7 6.7 4.7 6.7 3.7 V1.6 C6.7 1.6 6.9 0.3 4.5 0.3 Z" fill="#3f8bbd"/><path d="M4.5 8.7 C6.8 8.7 6.6 7.7 6.6 7.7 V6.4 H4.4 V5.9 H7.6 C7.6 5.9 8.8 6 8.8 4 C8.8 2 7.7 2 7.7 2 H7 V3.2 C7 3.2 7 4.3 5.9 4.3 H3.3 C3.3 4.3 2.3 4.3 2.3 5.3 V7.4 C2.3 7.4 2.1 8.7 4.5 8.7 Z" fill="#5aa4cc"/></svg>
<div style="position:absolute;left:214px;top:61.91px;line-height:13.78px;font-size:10.6px;color:#fff;font-weight:normal;font-family:'Liberation Sans', sans-serif;white-space:pre;letter-spacing:0.09px">Nonlinear Sigma Models in Twistor Theory</div>
<svg style="position:absolute;left:419.5px;top:64px;" width="6" height="9" viewBox="0 0 6 9"><path d="M1 0.8 L4.7 4.5 L1 8.2" stroke="#fff" stroke-width="1" fill="none"/></svg>
<div style="position:absolute;left:429px;top:61.91px;line-height:13.78px;font-size:10.6px;color:#fff;font-weight:normal;font-family:'Liberation Sans', sans-serif;white-space:pre;">...</div>
<div style="position:absolute;left:182px;top:77px;width:1018px;height:484px;overflow:hidden">
<div style="position:absolute;left:56.5px;top:79px;width:960.5px;height:16px;border:1px solid #a67a4c"></div>
<div style="position:absolute;left:0;width:35px;text-align:right;top:1.00px;line-height:15.86px;font-size:11.1px;font-family:'Liberation Mono', monospace;color:#fff;transform:scaleY(1.13);transform-origin:0 4px">1</div>
<div style="position:absolute;left:57px;top:1.00px;line-height:15.86px;font-size:11.1px;font-family:'Liberation Mono', monospace;white-space:pre;letter-spacing:-0.26px;transform:scaleY(1.13);transform-origin:0 4px"><span style="color:#c586c0">from </span><span style="color:#4ec9b0">qiskit </span><span style="color:#c586c0">import </span><span style="color:#4ec9b0">QuantumCircuit</span><span style="color:#d4d4d4">, </span><span style="color:#9cdcfe">Aer</span><span style="color:#d4d4d4">, </span><span style="color:#dcdcaa">transpile</span><span style="color:#d4d4d4">, </span><span style="color:#dcdcaa">assemble</span></div>
<div style="position:absolute;left:0;width:35px;text-align:right;top:16.86px;line-height:15.86px;font-size:11.1px;font-family:'Liberation Mono', monospace;color:#fff;transform:scaleY(1.13);transform-origin:0 4px">2</div>
<div style="position:absolute;left:57px;top:16.86px;line-height:15.86px;font-size:11.1px;font-family:'Liberation Mono', monospace;white-space:pre;letter-spacing:-0.26px;transform:scaleY(1.13);transform-origin:0 4px"><span style="color:#c586c0">from </span><span style="color:#4ec9b0">qiskit.algorithms.optimizers </span><span style="color:#c586c0">import </span><span style="color:#4ec9b0">COBYLA</span></div>
<div style="position:absolute;left:0;width:35px;text-align:right;top:32.72px;line-height:15.86px;font-size:11.1px;font-family:'Liberation Mono', monospace;color:#fff;transform:scaleY(1.13);transform-origin:0 4px">3</div>
<div style="position:absolute;left:57px;top:32.72px;line-height:15.86px;font-size:11.1px;font-family:'Liberation Mono', monospace;white-space:pre;letter-spacing:-0.26px;transform:scaleY(1.13);transform-origin:0 4px"><span style="color:#c586c0">from </span><span style="color:#4ec9b0">qiskit.circuit </span><span style="color:#c586c0">import </span><span style="color:#4ec9b0">Parameter</span></div>
<div style="position:absolute;left:0;width:35px;text-align:right;top:48.58px;line-height:15.86px;font-size:11.1px;font-family:'Liberation Mono', monospace;color:#fff;transform:scaleY(1.13);transform-origin:0 4px">4</div>
<div style="position:absolute;left:57px;top:48.58px;line-height:15.86px;font-size:11.1px;font-family:'Liberation Mono', monospace;white-space:pre;letter-spacing:-0.26px;transform:scaleY(1.13);transform-origin:0 4px"><span style="color:#c586c0">import </span><span style="color:#4ec9b0">numpy </span><span style="color:#c586c0">as </span><span style="color:#4ec9b0">np</span></div>
<div style="position:absolute;left:0;width:35px;text-align:right;top:64.44px;line-height:15.86px;font-size:11.1px;font-family:'Liberation Mono', monospace;color:#fff;transform:scaleY(1.13);transform-origin:0 4px">5</div>
<div style="position:absolute;left:57px;top:64.44px;line-height:15.86px;font-size:11.1px;font-family:'Liberation Mono', monospace;white-space:pre;letter-spacing:-0.26px;transform:scaleY(1.13);transform-origin:0 4px"><span style="color:#c586c0">import </span><span style="color:#4ec9b0">matplotlib.pyplot </span><span style="color:#c586c0">as </span><span style="color:#4ec9b0">plt</span></div>
<div style="position:absolute;left:0;width:35px;text-align:right;top:80.30px;line-height:15.86px;font-size:11.1px;font-family:'Liberation Mono', monospace;color:#a67a4c;transform:scaleY(1.13);transform-origin:0 4px">6</div>
<div style="position:absolute;left:0;width:35px;text-align:right;top:96.16px;line-height:15.86px;font-size:11.1px;font-family:'Liberation Mono', monospace;color:#fff;transform:scaleY(1.13);transform-origin:0 4px">7</div>
<div style="position:absolute;left:57px;top:96.16px;line-height:15.86px;font-size:11.1px;font-family:'Liberation Mono', monospace;white-space:pre;letter-spacing:-0.26px;transform:scaleY(1.13);transform-origin:0 4px"><span style="color:#7ca668"># Number of qubits (spacetime points)</span></div>
<div style="position:absolute;left:0;width:35px;text-align:right;top:112.02px;line-height:15.86px;font-size:11.1px;font-family:'Liberation Mono', monospace;color:#fff;transform:scaleY(1.13);transform-origin:0 4px">8</div>
<div style="position:absolute;left:57px;top:112.02px;line-height:15.86px;font-size:11.1px;font-family:'Liberation Mono', monospace;white-space:pre;letter-spacing:-0.26px;transform:scaleY(1.13);transform-origin:0 4px"><span style="color:#9cdcfe">n_qubits </span><span style="color:#d4d4d4">= </span><span style="color:#b5cea8">4</span></div>
<div style="position:absolute;left:0;width:35px;text-align:right;top:127.88px;line-height:15.86px;font-size:11.1px;font-family:'Liberation Mono', monospace;color:#fff;transform:scaleY(1.13);transform-origin:0 4px">9</div>
<div style="position:absolute;left:0;width:35px;text-align:right;top:143.74px;line-height:15.86px;font-size:11.1px;font-family:'Liberation Mono', monospace;color:#fff;transform:scaleY(1.13);transform-origin:0 4px">10</div>
<div style="position:absolute;left:57px;top:143.74px;line-height:15.86px;font-size:11.1px;font-family:'Liberation Mono', monospace;white-space:pre;letter-spacing:-0.26px;transform:scaleY(1.13);transform-origin:0 4px"><span style="color:#7ca668"># Initialize Quantum Circuit</span></div>
<div style="position:absolute;left:0;width:35px;text-align:right;top:159.60px;line-height:15.86px;font-size:11.1px;font-family:'Liberation Mono', monospace;color:#fff;transform:scaleY(1.13);transform-origin:0 4px">11</div>
<div style="position:absolute;left:57px;top:159.60px;line-height:15.86px;font-size:11.1px;font-family:'Liberation Mono', monospace;white-space:pre;letter-spacing:-0.26px;transform:scaleY(1.13);transform-origin:0 4px"><span style="color:#9cdcfe">circuit </span><span style="color:#d4d4d4">= </span><span style="color:#4ec9b0">QuantumCircuit</span><span style="color:#ffd700">(</span><span style="color:#9cdcfe">n_qubits</span><span style="color:#ffd700">)</span></div>
<div style="position:absolute;left:0;width:35px;text-align:right;top:175.46px;line-height:15.86px;font-size:11.1px;font-family:'Liberation Mono', monospace;color:#fff;transform:scaleY(1.13);transform-origin:0 4px">12</div>
<div style="position:absolute;left:0;width:35px;text-align:right;top:191.32px;line-height:15.86px;font-size:11.1px;font-family:'Liberation Mono', monospace;color:#fff;transform:scaleY(1.13);transform-origin:0 4px">13</div>
<div style="position:absolute;left:57px;top:191.32px;line-height:15.86px;font-size:11.1px;font-family:'Liberation Mono', monospace;white-space:pre;letter-spacing:-0.26px;transform:scaleY(1.13);transform-origin:0 4px"><span style="color:#7ca668"># Create parameterized gates (variational form)</span></div>
<div style="position:absolute;left:0;width:35px;text-align:right;top:207.18px;line-height:15.86px;font-size:11.1px;font-family:'Liberation Mono', monospace;color:#fff;transform:scaleY(1.13);transform-origin:0 4px">14</div>
<div style="position:absolute;left:57px;top:207.18px;line-height:15.86px;font-size:11.1px;font-family:'Liberation Mono', monospace;white-space:pre;letter-spacing:-0.26px;transform:scaleY(1.13);transform-origin:0 4px"><span style="color:#9cdcfe">theta </span><span style="color:#d4d4d4">= </span><span style="color:#ffd700">[</span><span style="color:#4ec9b0">Parameter</span><span style="color:#da70d6">(</span><span style="color:#569cd6">f</span><span style="color:#ce9178">&#x27;θ_</span><span style="color:#569cd6">{</span><span style="color:#9cdcfe">i</span><span style="color:#569cd6">}</span><span style="color:#ce9178">&#x27;</span><span style="color:#da70d6">)</span><span style="color:#c586c0"> for </span><span style="color:#9cdcfe">i </span><span style="color:#c586c0">in </span><span style="color:#4ec9b0">range</span><span style="color:#da70d6">(</span><span style="color:#9cdcfe">n_qubits</span><span style="color:#da70d6">)</span><span style="color:#ffd700">]</span></div>
<div style="position:absolute;left:0;width:35px;text-align:right;top:223.04px;line-height:15.86px;font-size:11.1px;font-family:'Liberation Mono', monospace;color:#fff;transform:scaleY(1.13);transform-origin:0 4px">15</div>
<div style="position:absolute;left:0;width:35px;text-align:right;top:238.90px;line-height:15.86px;font-size:11.1px;font-family:'Liberation Mono', monospace;color:#fff;transform:scaleY(1.13);transform-origin:0 4px">16</div>
<div style="position:absolute;left:57px;top:238.90px;line-height:15.86px;font-size:11.1px;font-family:'Liberation Mono', monospace;white-space:pre;letter-spacing:-0.26px;transform:scaleY(1.13);transform-origin:0 4px"><span style="color:#c586c0">for </span><span style="color:#9cdcfe">i </span><span style="color:#c586c0">in </span><span style="color:#4ec9b0">range</span><span style="color:#ffd700">(</span><span style="color:#9cdcfe">n_qubits</span><span style="color:#ffd700">)</span><span style="color:#d4d4d4">:</span></div>
<div style="position:absolute;left:0;width:35px;text-align:right;top:254.76px;line-height:15.86px;font-size:11.1px;font-family:'Liberation Mono', monospace;color:#fff;transform:scaleY(1.13);transform-origin:0 4px">17</div>
<div style="position:absolute;left:57px;top:254.76px;line-height:15.86px;font-size:11.1px;font-family:'Liberation Mono', monospace;white-space:pre;letter-spacing:-0.26px;transform:scaleY(1.13);transform-origin:0 4px"><span style="color:#9cdcfe">    circuit</span><span style="color:#d4d4d4">.</span><span style="color:#dcdcaa">rx</span><span style="color:#ffd700">(</span><span style="color:#9cdcfe">theta</span><span style="color:#da70d6">[</span><span style="color:#9cdcfe">i</span><span style="color:#da70d6">]</span><span style="color:#d4d4d4">, </span><span style="color:#9cdcfe">i</span><span style="color:#ffd700">)</span></div>
<div style="position:absolute;left:0;width:35px;text-align:right;top:270.62px;line-height:15.86px;font-size:11.1px;font-family:'Liberation Mono', monospace;color:#fff;transform:scaleY(1.13);transform-origin:0 4px">18</div>
<div style="position:absolute;left:57px;top:270.62px;line-height:15.86px;font-size:11.1px;font-family:'Liberation Mono', monospace;white-space:pre;letter-spacing:-0.26px;transform:scaleY(1.13);transform-origin:0 4px"><span style="color:#9cdcfe">    circuit</span><span style="color:#d4d4d4">.</span><span style="color:#dcdcaa">rz</span><span style="color:#ffd700">(</span><span style="color:#9cdcfe">theta</span><span style="color:#da70d6">[</span><span style="color:#9cdcfe">i</span><span style="color:#da70d6">]</span><span style="color:#d4d4d4">, </span><span style="color:#9cdcfe">i</span><span style="color:#ffd700">)</span></div>
<div style="position:absolute;left:0;width:35px;text-align:right;top:286.48px;line-height:15.86px;font-size:11.1px;font-family:'Liberation Mono', monospace;color:#fff;transform:scaleY(1.13);transform-origin:0 4px">19</div>
<div style="position:absolute;left:57px;top:286.48px;line-height:15.86px;font-size:11.1px;font-family:'Liberation Mono', monospace;white-space:pre;letter-spacing:-0.26px;transform:scaleY(1.13);transform-origin:0 4px"><span style="color:#c586c0">    if </span><span style="color:#9cdcfe">i </span><span style="color:#d4d4d4">&lt; </span><span style="color:#9cdcfe">n_qubits </span><span style="color:#d4d4d4">- </span><span style="color:#b5cea8">1</span><span style="color:#d4d4d4">:</span></div>
<div style="position:absolute;left:0;width:35px;text-align:right;top:302.34px;line-height:15.86px;font-size:11.1px;font-family:'Liberation Mono', monospace;color:#fff;transform:scaleY(1.13);transform-origin:0 4px">20</div>
<div style="position:absolute;left:57px;top:302.34px;line-height:15.86px;font-size:11.1px;font-family:'Liberation Mono', monospace;white-space:pre;letter-spacing:-0.26px;transform:scaleY(1.13);transform-origin:0 4px"><span style="color:#9cdcfe">        circuit</span><span style="color:#d4d4d4">.</span><span style="color:#dcdcaa">cx</span><span style="color:#ffd700">(</span><span style="color:#9cdcfe">i</span><span style="color:#d4d4d4">, </span><span style="color:#9cdcfe">i </span><span style="color:#d4d4d4">+ </span><span style="color:#b5cea8">1</span><span style="color:#ffd700">)</span></div>
<div style="position:absolute;left:0;width:35px;text-align:right;top:318.20px;line-height:15.86px;font-size:11.1px;font-family:'Liberation Mono', monospace;color:#fff;transform:scaleY(1.13);transform-origin:0 4px">21</div>
<div style="position:absolute;left:0;width:35px;text-align:right;top:334.06px;line-height:15.86px;font-size:11.1px;font-family:'Liberation Mono', monospace;color:#fff;transform:scaleY(1.13);transform-origin:0 4px">22</div>
<div style="position:absolute;left:57px;top:334.06px;line-height:15.86px;font-size:11.1px;font-family:'Liberation Mono', monospace;white-space:pre;letter-spacing:-0.26px;transform:scaleY(1.13);transform-origin:0 4px"><span style="color:#7ca668"># Placeholder for the objective function to minimize</span></div>
<div style="position:absolute;left:0;width:35px;text-align:right;top:349.92px;line-height:15.86px;font-size:11.1px;font-family:'Liberation Mono', monospace;color:#fff;transform:scaleY(1.13);transform-origin:0 4px">23</div>
<div style="position:absolute;left:57px;top:349.92px;line-height:15.86px;font-size:11.1px;font-family:'Liberation Mono', monospace;white-space:pre;letter-spacing:-0.26px;transform:scaleY(1.13);transform-origin:0 4px"><span style="color:#7ca668"># Normally, you would calculate the expectation value</span></div>
<div style="position:absolute;left:0;width:35px;text-align:right;top:365.78px;line-height:15.86px;font-size:11.1px;font-family:'Liberation Mono', monospace;color:#fff;transform:scaleY(1.13);transform-origin:0 4px">24</div>
<div style="position:absolute;left:57px;top:365.78px;line-height:15.86px;font-size:11.1px;font-family:'Liberation Mono', monospace;white-space:pre;letter-spacing:-0.26px;transform:scaleY(1.13);transform-origin:0 4px"><span style="color:#569cd6">def </span><span style="color:#dcdcaa">objective_function</span><span style="color:#ffd700">(</span><span style="color:#9cdcfe">params</span><span style="color:#ffd700">)</span><span style="color:#d4d4d4">:</span></div>
<div style="position:absolute;left:0;width:35px;text-align:right;top:381.64px;line-height:15.86px;font-size:11.1px;font-family:'Liberation Mono', monospace;color:#fff;transform:scaleY(1.13);transform-origin:0 4px">25</div>
<div style="position:absolute;left:57px;top:381.64px;line-height:15.86px;font-size:11.1px;font-family:'Liberation Mono', monospace;white-space:pre;letter-spacing:-0.26px;transform:scaleY(1.13);transform-origin:0 4px"><span style="color:#7ca668">    # For demonstration, we&#x27;ll just return the sum</span></div>
<div style="position:absolute;left:0;width:35px;text-align:right;top:397.50px;line-height:15.86px;font-size:11.1px;font-family:'Liberation Mono', monospace;color:#fff;transform:scaleY(1.13);transform-origin:0 4px">26</div>
<div style="position:absolute;left:57px;top:397.50px;line-height:15.86px;font-size:11.1px;font-family:'Liberation Mono', monospace;white-space:pre;letter-spacing:-0.26px;transform:scaleY(1.13);transform-origin:0 4px"><span style="color:#c586c0">    return </span><span style="color:#4ec9b0">np</span><span style="color:#d4d4d4">.</span><span style="color:#dcdcaa">sum</span><span style="color:#ffd700">(</span><span style="color:#4ec9b0">np</span><span style="color:#d4d4d4">.</span><span style="color:#dcdcaa">square</span><span style="color:#da70d6">(</span><span style="color:#9cdcfe">params</span><span style="color:#da70d6">)</span><span style="color:#ffd700">)</span></div>
<div style="position:absolute;left:0;width:35px;text-align:right;top:413.36px;line-height:15.86px;font-size:11.1px;font-family:'Liberation Mono', monospace;color:#fff;transform:scaleY(1.13);transform-origin:0 4px">27</div>
<div style="position:absolute;left:0;width:35px;text-align:right;top:429.22px;line-height:15.86px;font-size:11.1px;font-family:'Liberation Mono', monospace;color:#fff;transform:scaleY(1.13);transform-origin:0 4px">28</div>
<div style="position:absolute;left:57px;top:429.22px;line-height:15.86px;font-size:11.1px;font-family:'Liberation Mono', monospace;white-space:pre;letter-spacing:-0.26px;transform:scaleY(1.13);transform-origin:0 4px"><span style="color:#7ca668"># Perform optimization to find the ground state</span></div>
<div style="position:absolute;left:0;width:35px;text-align:right;top:445.08px;line-height:15.86px;font-size:11.1px;font-family:'Liberation Mono', monospace;color:#fff;transform:scaleY(1.13);transform-origin:0 4px">29</div>
<div style="position:absolute;left:57px;top:445.08px;line-height:15.86px;font-size:11.1px;font-family:'Liberation Mono', monospace;white-space:pre;letter-spacing:-0.26px;transform:scaleY(1.13);transform-origin:0 4px"><span style="color:#9cdcfe">optimizer </span><span style="color:#d4d4d4">= </span><span style="color:#4ec9b0">COBYLA</span><span style="color:#ffd700">(</span><span style="color:#9cdcfe">maxiter</span><span style="color:#d4d4d4">=</span><span style="color:#b5cea8">500</span><span style="color:#ffd700">)</span></div>
<div style="position:absolute;left:0;width:35px;text-align:right;top:460.94px;line-height:15.86px;font-size:11.1px;font-family:'Liberation Mono', monospace;color:#fff;transform:scaleY(1.13);transform-origin:0 4px">30</div>
<div style="position:absolute;left:57px;top:460.94px;line-height:15.86px;font-size:11.1px;font-family:'Liberation Mono', monospace;white-space:pre;letter-spacing:-0.26px;transform:scaleY(1.13);transform-origin:0 4px"><span style="color:#9cdcfe">params </span><span style="color:#d4d4d4">= </span><span style="color:#4ec9b0">np</span><span style="color:#d4d4d4">.</span><span style="color:#4ec9b0">random</span><span style="color:#d4d4d4">.</span><span style="color:#dcdcaa">rand</span><span style="color:#ffd700">(</span><span style="color:#9cdcfe">n_qubits</span><span style="color:#ffd700">)</span><span style="color:#7ca668">  # Initial parameters</span></div>
<div style="position:absolute;left:0;width:35px;text-align:right;top:476.80px;line-height:15.86px;font-size:11.1px;font-family:'Liberation Mono', monospace;color:#fff;transform:scaleY(1.13);transform-origin:0 4px">31</div>
<div style="position:absolute;left:56px;top:252.95999999999998px;width:1px;height:62.94px;background:#c8c8c8"></div>
<div style="position:absolute;left:82px;top:300.53999999999996px;width:1px;height:15.36px;background:#c8c8c8"></div>
<div style="position:absolute;left:56px;top:379.84px;width:1px;height:31.22px;background:#c8c8c8"></div>
<div style="position:absolute;left:280.5px;top:16px;width:19.5px;height:1.2px;background-image:linear-gradient(90deg,#e8e8e8 62%,transparent 62%);background-size:4.9px 1.2px"></div>
<div style="position:absolute;left:312.7px;top:16px;width:57.69999999999999px;height:1.2px;background-image:linear-gradient(90deg,#e8e8e8 62%,transparent 62%);background-size:4.9px 1.2px"></div>
<div style="position:absolute;left:383px;top:16px;width:52px;height:1.2px;background-image:linear-gradient(90deg,#e8e8e8 62%,transparent 62%);background-size:4.9px 1.2px"></div>
</div>
<div style="position:absolute;left:1188px;top:77px;width:12px;height:188px;background:rgba(75,118,134,0.94)"></div>
<div style="position:absolute;left:1188px;top:106.5px;width:12px;height:1.2px;background:#a8d8e8"></div>
<div style="position:absolute;left:182px;top:561px;width:1018px;height:1px;background:#6d9194"></div>
<div style="position:absolute;left:198.7px;top:571.14px;line-height:11.31px;font-size:8.7px;color:#fff;font-weight:normal;font-family:'Liberation Sans', sans-serif;white-space:pre;letter-spacing:-0.2px">PROBLEMS</div>
<svg style="position:absolute;left:250.5px;top:569px;" width="17" height="17" viewBox="0 0 17 17"><circle cx="8.2" cy="8" r="7.2" stroke="#fff" stroke-width="1" fill="none"/><text x="8.2" y="11.2" font-size="9" font-family="Liberation Sans" fill="#fff" text-anchor="middle">3</text></svg>
<div style="position:absolute;left:284.5px;top:571.14px;line-height:11.31px;font-size:8.7px;color:#fff;font-weight:normal;font-family:'Liberation Sans', sans-serif;white-space:pre;letter-spacing:-0.2px">OUTPUT</div>
<div style="position:absolute;left:339px;top:571.14px;line-height:11.31px;font-size:8.7px;color:#fff;font-weight:normal;font-family:'Liberation Sans', sans-serif;white-space:pre;letter-spacing:-0.25px">DEBUG CONSOLE</div>
<div style="position:absolute;left:427.5px;top:562.5px;width:48.5px;height:27px;border:1px solid #a67a4c"></div>
<div style="position:absolute;left:430px;top:571.14px;line-height:11.31px;font-size:8.7px;color:#fff;font-weight:normal;font-family:'Liberation Sans', sans-serif;white-space:pre;letter-spacing:-0.3px">TERMINAL</div>
<div style="position:absolute;left:430px;top:585.5px;width:43px;height:1.3px;background:#9bb8c2"></div>
<div style="position:absolute;left:493.5px;top:571.14px;line-height:11.31px;font-size:8.7px;color:#fff;font-weight:normal;font-family:'Liberation Sans', sans-serif;white-space:pre;letter-spacing:-0.2px">PORTS</div>
<svg style="position:absolute;left:1071px;top:573.5px;" width="8" height="5" viewBox="0 0 8 5"><path d="M0.5 0.8 L3.8 4 L7 0.8" stroke="#fff" stroke-width="1" fill="none"/></svg>
<svg style="position:absolute;left:1089px;top:570.5px;" width="12" height="12" viewBox="0 0 12 12"><rect x="0.6" y="0.6" width="10.8" height="10.8" rx="1" stroke="#fff" stroke-width="1.1" fill="none"/><path d="M6 0.6 V11.4" stroke="#fff" stroke-width="1.1"/></svg>
<svg style="position:absolute;left:1110.5px;top:570px;" width="10" height="13" viewBox="0 0 10 13"><path d="M0.5 2.5 H9.5 M3.5 2.5 V1 H6.5 V2.5" stroke="#b8a8d8" stroke-width="1" fill="none"/><path d="M1.5 3.5 H8.5 L8 12 H2 Z" fill="#b8a8d8"/><path d="M4 5 V10.5 M6 5 V10.5" stroke="#5a4a7a" stroke-width="0.8"/></svg>
<div style="position:absolute;left:1132.3px;top:575.3px;width:2.2px;height:2.2px;background:#fff;border-radius:1.1px"></div>
<div style="position:absolute;left:1136.8px;top:575.3px;width:2.2px;height:2.2px;background:#fff;border-radius:1.1px"></div>
<div style="position:absolute;left:1141.3px;top:575.3px;width:2.2px;height:2.2px;background:#fff;border-radius:1.1px"></div>
<svg style="position:absolute;left:1154.5px;top:572px;" width="9" height="6" viewBox="0 0 9 6"><path d="M0.7 5 L4.5 1.2 L8.3 5" stroke="#fff" stroke-width="1.1" fill="none"/></svg>
<svg style="position:absolute;left:1176.5px;top:572px;" width="9" height="9" viewBox="0 0 9 9"><path d="M0.7 0.7 L8.3 8.3 M8.3 0.7 L0.7 8.3" stroke="#fff" stroke-width="1.1"/></svg>
<div style="position:absolute;left:1191px;top:595px;width:3px;height:5px;background:#9a9a9a"></div>
<svg style="position:absolute;left:187px;top:598.8px;" width="8" height="8" viewBox="0 0 8 8"><circle cx="3.8" cy="3.8" r="3" stroke="#bdbdbd" stroke-width="1.1" fill="none"/></svg>
<div style="position:absolute;left:198.7px;top:596.10px;line-height:14.0px;font-size:10.42px;font-family:'Liberation Mono', monospace;white-space:pre"><span style="color:#e8e8e8">PS C:\Users\steve\OneDrive\Documents\QC&gt; &amp; </span><span style="color:#d9d12e">C:/Users/steve/AppData/Local/Microsoft/WindowsApps/python3.10.exe</span><span style="color:#e8e8e8"> </span><span style="color:#29b8b3">&quot;c:/Users/steve/OneDrive/Documents/QC/Nonlinear</span></div>
<div style="position:absolute;left:198.7px;top:610.10px;line-height:14.0px;font-size:10.42px;font-family:'Liberation Mono', monospace;white-space:pre"><span style="color:#29b8b3">Sigma Models in Twistor Theory&quot;</span></div>
<div style="position:absolute;left:198.7px;top:624.10px;line-height:14.0px;font-size:10.42px;font-family:'Liberation Mono', monospace;white-space:pre"><span style="color:#e8e8e8">Optimized Parameters: [ 2.22683092e-05 -2.29477287e-05  2.39027671e-05 -4.11540276e-05]</span></div>
<div style="position:absolute;left:198.7px;top:638.10px;line-height:14.0px;font-size:10.42px;font-family:'Liberation Mono', monospace;white-space:pre"><span style="color:#e8e8e8">Optimized Value: 3.2874721130848383e-09</span></div>
<div style="position:absolute;left:504.5px;top:182px;width:564px;height:417.5px;background:#fff;border-radius:6px;overflow:hidden;box-shadow:0 0 0 0.5px #d0d0d0">
<div style="position:absolute;left:0.0px;top:0px;width:564px;height:23px;background:#f3f3f3"></div>
<svg style="position:absolute;left:6.0px;top:5.5px;" width="13" height="13" viewBox="0 0 13 13"><circle cx="6.5" cy="6.5" r="6" fill="#e8eef4" stroke="#c8d0d8" stroke-width="0.6"/><path d="M3 3 L10 10" stroke="#5a3a1a" stroke-width="1.6"/><path d="M2.5 6 L7 2" stroke="#e0a030" stroke-width="2"/><path d="M5 8.5 L8.5 5" stroke="#c05020" stroke-width="1.2"/></svg>
<div style="position:absolute;left:20.9px;top:6.0px;line-height:13.0px;font-size:10.0px;color:#9a9a9a;font-weight:normal;font-family:'Liberation Sans', sans-serif;white-space:pre;">Figure 1</div>
<div style="position:absolute;left:463.5px;top:10.5px;width:8.5px;height:1px;background:#a0a0a0"></div>
<svg style="position:absolute;left:501.0px;top:6.5px;" width="10" height="10" viewBox="0 0 10 10"><rect x="0.6" y="0.6" width="8.6" height="8.6" rx="1" stroke="#707070" stroke-width="1" fill="none"/></svg>
<svg style="position:absolute;left:539.5px;top:6.5px;" width="10" height="10" viewBox="0 0 10 10"><path d="M0.6 0.6 L9.2 9.2 M9.2 0.6 L0.6 9.2" stroke="#707070" stroke-width="1"/></svg>
<div style="position:absolute;left:90.34px;top:85.8px;width:83.52px;height:87.4px;background:#0000ff"></div>
<div style="position:absolute;left:194.74px;top:173.2px;width:83.52px;height:90.07px;background:#0000ff"></div>
<div style="position:absolute;left:299.14px;top:79.38px;width:83.52px;height:93.82px;background:#0000ff"></div>
<div style="position:absolute;left:403.54px;top:173.2px;width:83.52px;height:161.53px;background:#0000ff"></div>
<svg style="position:absolute;left:67.8px;top:64.2px;" width="442.70000000000005" height="285.8" viewBox="0 0 442.70000000000005 285.8"><rect x="3" y="3" width="436.70" height="279.80" stroke="#585858" stroke-width="1.7" fill="none"/></svg>
<svg style="position:absolute;left:65.5px;top:92.7px;" width="6" height="4" viewBox="0 0 6 4"><path d="M0.5 2 H5" stroke="#585858" stroke-width="1.5"/></svg>
<div style="position:absolute;left:-4.5px;width:66.60000000000002px;text-align:right;top:87.10px;line-height:16px;font-size:12.9px;color:#262626;font-family:'Liberation Sans', sans-serif;letter-spacing:0.2px">2</div>
<svg style="position:absolute;left:65.5px;top:131.95px;" width="6" height="4" viewBox="0 0 6 4"><path d="M0.5 2 H5" stroke="#585858" stroke-width="1.5"/></svg>
<div style="position:absolute;left:-4.5px;width:66.60000000000002px;text-align:right;top:126.35px;line-height:16px;font-size:12.9px;color:#262626;font-family:'Liberation Sans', sans-serif;letter-spacing:0.2px">1</div>
<svg style="position:absolute;left:65.5px;top:171.2px;" width="6" height="4" viewBox="0 0 6 4"><path d="M0.5 2 H5" stroke="#585858" stroke-width="1.5"/></svg>
<div style="position:absolute;left:-4.5px;width:66.60000000000002px;text-align:right;top:165.60px;line-height:16px;font-size:12.9px;color:#262626;font-family:'Liberation Sans', sans-serif;letter-spacing:0.2px">0</div>
<svg style="position:absolute;left:65.5px;top:210.45px;" width="6" height="4" viewBox="0 0 6 4"><path d="M0.5 2 H5" stroke="#585858" stroke-width="1.5"/></svg>
<div style="position:absolute;left:-4.5px;width:66.60000000000002px;text-align:right;top:204.85px;line-height:16px;font-size:12.9px;color:#262626;font-family:'Liberation Sans', sans-serif;letter-spacing:0.2px">−1</div>
<svg style="position:absolute;left:65.5px;top:249.7px;" width="6" height="4" viewBox="0 0 6 4"><path d="M0.5 2 H5" stroke="#585858" stroke-width="1.5"/></svg>
<div style="position:absolute;left:-4.5px;width:66.60000000000002px;text-align:right;top:244.10px;line-height:16px;font-size:12.9px;color:#262626;font-family:'Liberation Sans', sans-serif;letter-spacing:0.2px">−2</div>
<svg style="position:absolute;left:65.5px;top:288.95px;" width="6" height="4" viewBox="0 0 6 4"><path d="M0.5 2 H5" stroke="#585858" stroke-width="1.5"/></svg>
<div style="position:absolute;left:-4.5px;width:66.60000000000002px;text-align:right;top:283.35px;line-height:16px;font-size:12.9px;color:#262626;font-family:'Liberation Sans', sans-serif;letter-spacing:0.2px">−3</div>
<svg style="position:absolute;left:65.5px;top:328.2px;" width="6" height="4" viewBox="0 0 6 4"><path d="M0.5 2 H5" stroke="#585858" stroke-width="1.5"/></svg>
<div style="position:absolute;left:-4.5px;width:66.60000000000002px;text-align:right;top:322.60px;line-height:16px;font-size:12.9px;color:#262626;font-family:'Liberation Sans', sans-serif;letter-spacing:0.2px">−4</div>
<svg style="position:absolute;left:77.9px;top:347px;" width="4" height="6" viewBox="0 0 4 6"><path d="M2 0 V4.5" stroke="#585858" stroke-width="1.5"/></svg>
<div style="position:absolute;left:39.90px;width:80px;text-align:center;top:352.80px;line-height:16px;font-size:12.9px;color:#262626;font-family:'Liberation Sans', sans-serif;letter-spacing:0.3px">−0.5</div>
<svg style="position:absolute;left:130.1px;top:347px;" width="4" height="6" viewBox="0 0 4 6"><path d="M2 0 V4.5" stroke="#585858" stroke-width="1.5"/></svg>
<div style="position:absolute;left:92.10px;width:80px;text-align:center;top:352.80px;line-height:16px;font-size:12.9px;color:#262626;font-family:'Liberation Sans', sans-serif;letter-spacing:0.3px">0.0</div>
<svg style="position:absolute;left:182.3px;top:347px;" width="4" height="6" viewBox="0 0 4 6"><path d="M2 0 V4.5" stroke="#585858" stroke-width="1.5"/></svg>
<div style="position:absolute;left:144.30px;width:80px;text-align:center;top:352.80px;line-height:16px;font-size:12.9px;color:#262626;font-family:'Liberation Sans', sans-serif;letter-spacing:0.3px">0.5</div>
<svg style="position:absolute;left:234.5px;top:347px;" width="4" height="6" viewBox="0 0 4 6"><path d="M2 0 V4.5" stroke="#585858" stroke-width="1.5"/></svg>
<div style="position:absolute;left:196.50px;width:80px;text-align:center;top:352.80px;line-height:16px;font-size:12.9px;color:#262626;font-family:'Liberation Sans', sans-serif;letter-spacing:0.3px">1.0</div>
<svg style="position:absolute;left:286.7px;top:347px;" width="4" height="6" viewBox="0 0 4 6"><path d="M2 0 V4.5" stroke="#585858" stroke-width="1.5"/></svg>
<div style="position:absolute;left:248.70px;width:80px;text-align:center;top:352.80px;line-height:16px;font-size:12.9px;color:#262626;font-family:'Liberation Sans', sans-serif;letter-spacing:0.3px">1.5</div>
<svg style="position:absolute;left:338.9px;top:347px;" width="4" height="6" viewBox="0 0 4 6"><path d="M2 0 V4.5" stroke="#585858" stroke-width="1.5"/></svg>
<div style="position:absolute;left:300.90px;width:80px;text-align:center;top:352.80px;line-height:16px;font-size:12.9px;color:#262626;font-family:'Liberation Sans', sans-serif;letter-spacing:0.3px">2.0</div>
<svg style="position:absolute;left:391.1px;top:347px;" width="4" height="6" viewBox="0 0 4 6"><path d="M2 0 V4.5" stroke="#585858" stroke-width="1.5"/></svg>
<div style="position:absolute;left:353.10px;width:80px;text-align:center;top:352.80px;line-height:16px;font-size:12.9px;color:#262626;font-family:'Liberation Sans', sans-serif;letter-spacing:0.3px">2.5</div>
<svg style="position:absolute;left:443.3px;top:347px;" width="4" height="6" viewBox="0 0 4 6"><path d="M2 0 V4.5" stroke="#585858" stroke-width="1.5"/></svg>
<div style="position:absolute;left:405.30px;width:80px;text-align:center;top:352.80px;line-height:16px;font-size:12.9px;color:#262626;font-family:'Liberation Sans', sans-serif;letter-spacing:0.3px">3.0</div>
<svg style="position:absolute;left:495.5px;top:347px;" width="4" height="6" viewBox="0 0 4 6"><path d="M2 0 V4.5" stroke="#585858" stroke-width="1.5"/></svg>
<div style="position:absolute;left:457.50px;width:80px;text-align:center;top:352.80px;line-height:16px;font-size:12.9px;color:#262626;font-family:'Liberation Sans', sans-serif;letter-spacing:0.3px">3.5</div>
<div style="position:absolute;left:71.0px;top:51.41px;line-height:16.77px;font-size:12.9px;color:#262626;font-weight:normal;font-family:'Liberation Sans', sans-serif;white-space:pre;letter-spacing:0.6px">1e−5</div>
<div style="position:absolute;left:70.79999999999995px;width:436.70000000000005px;text-align:center;top:45px;line-height:20px;font-size:14.6px;color:#1a1a1a;font-family:'Liberation Sans', sans-serif;letter-spacing:0.45px">Optimized Parameters</div>
<div style="position:absolute;left:70.79999999999995px;width:436.70000000000005px;text-align:center;top:368.29999999999995px;line-height:16px;font-size:12.4px;color:#262626;font-family:'Liberation Sans', sans-serif;letter-spacing:0.35px">Parameter Index</div>
<div style="position:absolute;left:-66.40px;width:200px;text-align:center;top:199.00px;line-height:16px;font-size:12.4px;color:#262626;font-family:'Liberation Sans', sans-serif;letter-spacing:0.35px;transform:rotate(-90deg)">Optimized Parameter Value</div>
<div style="position:absolute;left:0.0px;top:387px;width:564px;height:22px;background:#efefef"></div>
<div style="position:absolute;left:0.0px;top:409px;width:564px;height:10px;background:#f7f7f7"></div>
<svg style="position:absolute;left:3.5px;top:396.5px;" width="17" height="15" viewBox="0 0 17 15"><path d="M8.5 0.8 L0.6 8 L2 8 L2 14.5 L6.5 14.5 L6.5 10 L10.5 10 L10.5 14.5 L15 14.5 L15 8 L16.4 8 Z" fill="#111"/><rect x="12" y="1.5" width="2.2" height="4" fill="#111"/></svg>
<svg style="position:absolute;left:26.0px;top:395.5px;" width="16" height="16" viewBox="0 0 16 16"><path d="M15 8 H4 M8 2.5 L2.5 8 L8 13.5" stroke="#808080" stroke-width="3" fill="none" stroke-linejoin="miter"/></svg>
<svg style="position:absolute;left:47.0px;top:395.5px;" width="16" height="16" viewBox="0 0 16 16"><path d="M1 8 H12 M8 2.5 L13.5 8 L8 13.5" stroke="#808080" stroke-width="3" fill="none" stroke-linejoin="miter"/></svg>
<div style="position:absolute;left:69.0px;top:393px;width:1px;height:20px;background:#d8d8d8"></div>
<svg style="position:absolute;left:74.5px;top:393px;" width="19" height="20" viewBox="0 0 19 20"><path d="M9.5 2 V18 M1.5 10 H17.5" stroke="#111" stroke-width="2.4"/><path d="M9.5 0 L6 4 H13 Z M9.5 20 L6 16 H13 Z M0 10 L4 6.5 V13.5 Z M19 10 L15 6.5 V13.5 Z" fill="#111"/></svg>
<svg style="position:absolute;left:98.0px;top:393.5px;" width="18" height="19" viewBox="0 0 18 19"><circle cx="7.3" cy="7.3" r="5.8" stroke="#111" stroke-width="2.6" fill="none"/><path d="M11.5 11.5 L16.8 17" stroke="#111" stroke-width="3" stroke-linecap="round"/></svg>
<svg style="position:absolute;left:120.5px;top:396px;" width="17" height="15" viewBox="0 0 17 15"><path d="M0.5 2 H16.5 M0.5 7.5 H16.5 M0.5 13 H16.5" stroke="#111" stroke-width="1.2"/><rect x="4" y="0" width="3" height="4" fill="#111"/><rect x="10" y="5.5" width="3" height="4" fill="#111"/><rect x="6" y="11" width="3" height="4" fill="#111"/></svg>
<div style="position:absolute;left:143.0px;top:393px;width:1px;height:20px;background:#d8d8d8"></div>
<svg style="position:absolute;left:149.5px;top:395.5px;" width="17" height="16" viewBox="0 0 17 16"><path d="M1 1 H12.5 L16 4.5 V15 H1 Z" stroke="#111" stroke-width="1.8" fill="none" stroke-linejoin="round"/><rect x="4" y="1" width="7" height="4.5" stroke="#111" stroke-width="1.6" fill="none"/><rect x="3.5" y="9" width="10" height="6" stroke="#111" stroke-width="1.6" fill="none"/></svg>
<div style="position:absolute;right:7.50px;top:394.5px;line-height:16px;font-size:11.6px;color:#222;font-family:'Liberation Sans', sans-serif;white-space:pre;letter-spacing:-0.14px">x=−0.427 y=2.21e−05</div>
</div>
</body></html>
